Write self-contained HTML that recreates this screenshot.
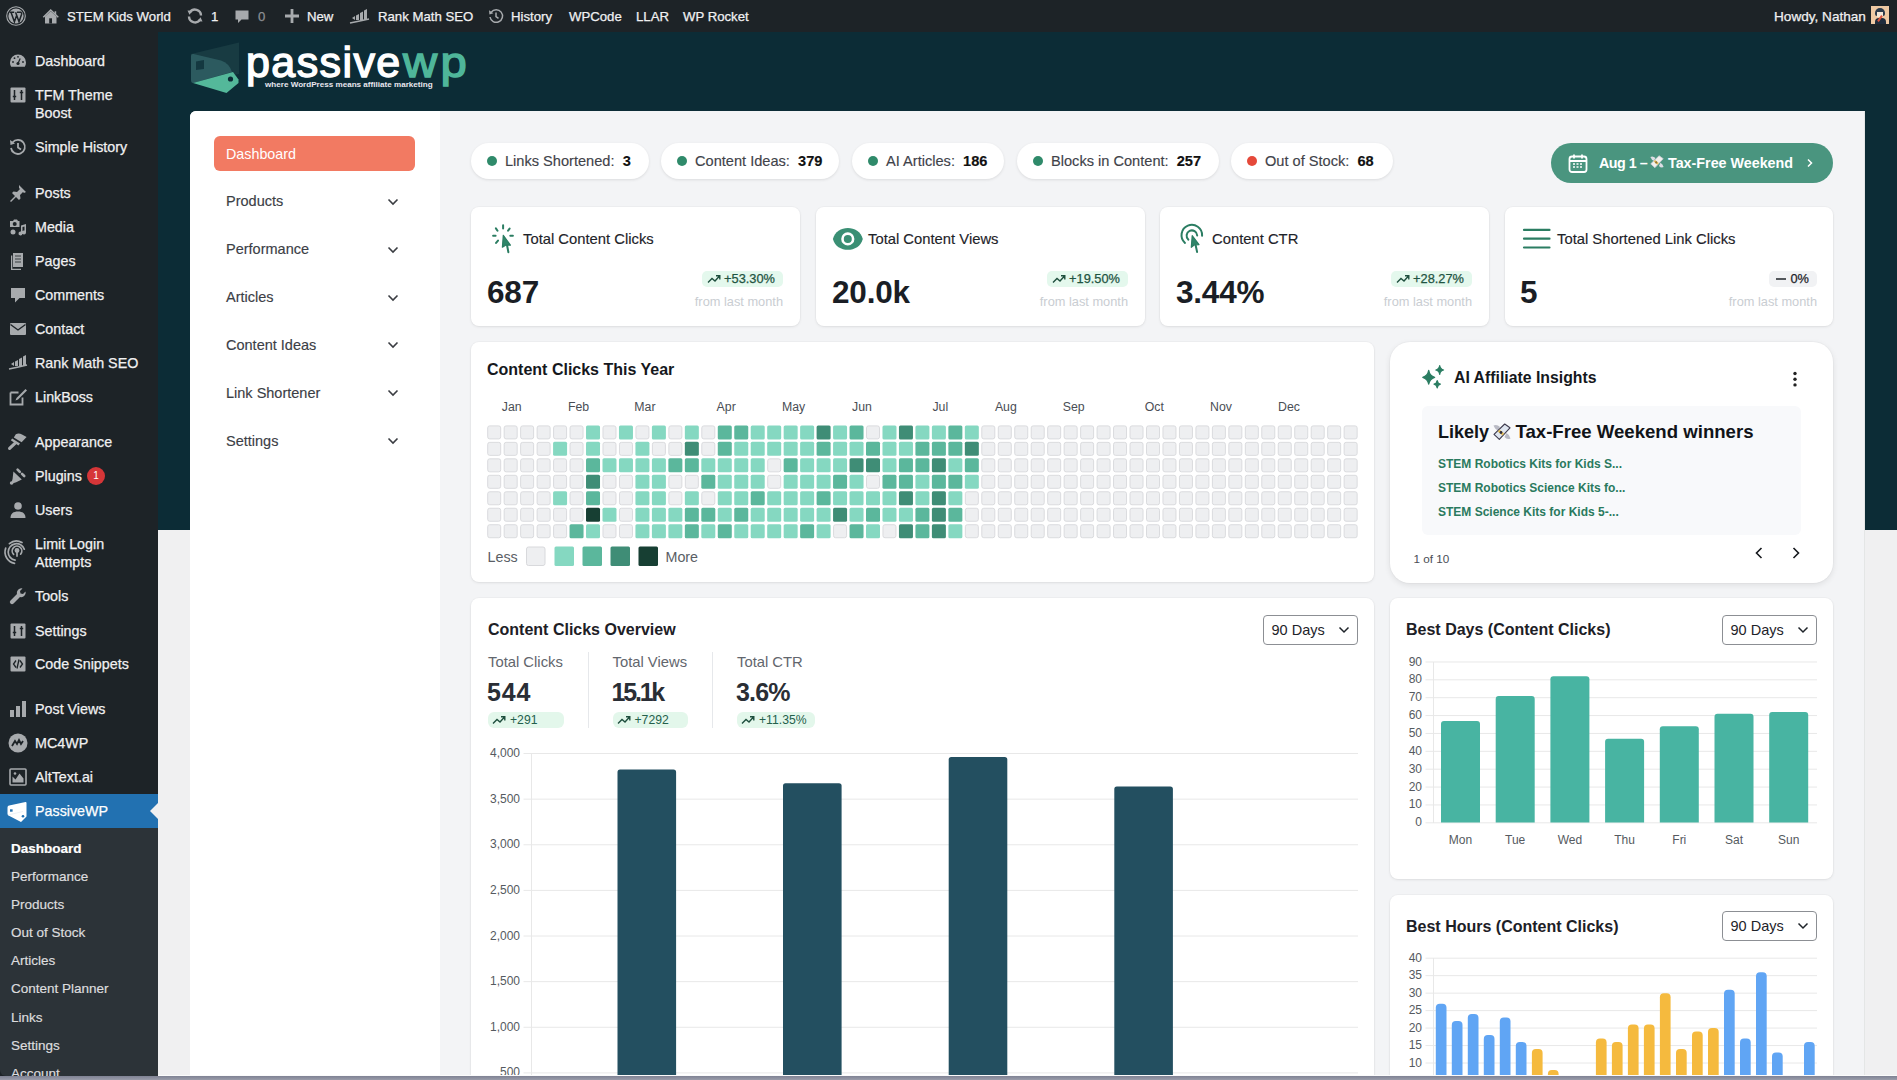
<!DOCTYPE html>
<html><head><meta charset="utf-8">
<style>
*{box-sizing:border-box}
html,body{margin:0;padding:0}
body{width:1897px;height:1080px;overflow:hidden;position:relative;background:#f0f0f1;font-family:"Liberation Sans",sans-serif;color:#1d2327}
.abs{position:absolute}
#ab{left:0;top:0;width:1897px;height:32px;background:#1d2327;color:#f0f0f1;font-size:13.2px;-webkit-text-stroke:0.25px currentColor}
#ab .t{position:absolute;top:10px;line-height:14px;white-space:nowrap}
#ab svg{position:absolute}
#sb{left:0;top:32px;width:158px;height:1044px;background:#1d2327}
#sb .it{position:absolute;left:35px;color:#f0f0f1;font-size:14.3px;-webkit-text-stroke:0.25px currentColor;line-height:18px;white-space:nowrap}
#sb .ic{position:absolute;left:8px;width:20px;height:20px;margin-top:-1px}
#sub{position:absolute;left:0;top:827px;width:158px;height:250px;background:#2c3338;border-bottom-left-radius:6px}
#sub .s{position:absolute;left:11px;color:#dcdcde;-webkit-text-stroke:0.2px currentColor;font-size:13.5px;line-height:18px;white-space:nowrap}
#teal{left:158px;top:32px;width:1739px;height:498px;background:#0c2c36}
#cont{left:190px;top:111px;width:1675px;height:965px;background:#f3f4f6;border-radius:6px 0 0 0;border-right:1px solid #e4e6e6}
#nav{left:190px;top:111px;width:250px;height:965px;background:#fff;border-radius:6px 0 0 0}
.nv{position:absolute;left:226px;font-size:14.5px;color:#3c4046;-webkit-text-stroke:0.15px currentColor;line-height:18px;white-space:nowrap}
.chev{position:absolute;left:387px;width:12px;height:8px}
.card{position:absolute;background:#fff;border-radius:8px;box-shadow:0 1px 3px rgba(0,0,0,0.08),0 0 0 1px rgba(0,0,0,0.02)}
.pill{position:absolute;top:143px;height:36px;background:#fff;border-radius:18px;box-shadow:0 1px 3px rgba(0,0,0,0.10);font-size:14.6px;line-height:36px;color:#3f434a;white-space:nowrap}
.pill .d{position:absolute;left:16px;top:13px;width:10px;height:10px;border-radius:5px;background:#2f8a6a}
.pill .l{position:absolute;left:34px;top:0;-webkit-text-stroke:0.15px currentColor}
.pill b{color:#111;font-weight:700}
#bot{left:0;top:1076px;width:1897px;height:4px;background:linear-gradient(#7f8294,#9a9caa)}
</style></head><body>
<style>
.ct{position:absolute;top:230px;font-size:14.8px;line-height:18px;color:#1e2329;-webkit-text-stroke:0.15px currentColor;white-space:nowrap}
.cn{position:absolute;top:274px;font-size:31.5px;line-height:36px;font-weight:700;color:#1a1e25;white-space:nowrap;letter-spacing:-0.2px}
.bd{position:absolute;top:271px;height:16px;border-radius:5px;background:#e4f8ed;color:#1f5442;-webkit-text-stroke:0.25px currentColor;font-size:12.8px;line-height:16px;white-space:nowrap;padding:0 8px 0 22px}
.bd svg{position:absolute;left:5px;top:3px}
.fl{position:absolute;top:294px;font-size:12.8px;line-height:16px;color:#c9cdd2;white-space:nowrap;text-align:right}
</style>
<div id="teal" class="abs"></div>
<div id="cont" class="abs"></div>
<div id="nav" class="abs"></div>
<div id="ab" class="abs">
 <svg style="left:6px;top:6px" width="20" height="20" viewBox="0 0 20 20"><circle cx="10" cy="10" r="9.3" fill="none" stroke="#a7aaad" stroke-width="1.1"/><circle cx="10" cy="10" r="7.6" fill="#a7aaad"/><path d="M3.6 6.2h4.6M11 6.2h4.4M5 6.3l3.4 9.4 2.2-6.2M9.6 6.3l3.4 9.4 2.6-7.4c.3-1-.1-1.7-.6-2" fill="none" stroke="#1d2327" stroke-width="1.5"/></svg>
 <svg style="left:42px;top:8px" width="18" height="18" viewBox="0 0 18 18"><path d="M1.3 9.2L8.7 2 16.3 9.2" fill="none" stroke="#a7aaad" stroke-width="1.5"/><path d="M12.6 3.3h1.6v3.4l-1.6-1.5z" fill="#a7aaad"/><path d="M3 8.6L8.7 3.3 14.5 8.6V15.5H3z" fill="#a7aaad"/><rect x="7.2" y="10.3" width="2.8" height="5.2" fill="#1d2327"/></svg>
 <span class="t" style="left:67px">STEM Kids World</span>
 <svg style="left:186px;top:8px" width="18" height="16" viewBox="0 0 18 16"><path d="M15 7.5A6 6 0 0 0 4 4.3" fill="none" stroke="#a7aaad" stroke-width="2.4"/><path d="M3 8.5A6 6 0 0 0 14 11.7" fill="none" stroke="#a7aaad" stroke-width="2.4"/><path d="M1.5 2.5l5 .3-3 4z M16.5 13.5l-5-.3 3-4z" fill="#a7aaad"/></svg>
 <span class="t" style="left:211px">1</span>
 <svg style="left:234px;top:9px" width="16" height="16" viewBox="0 0 16 16"><path d="M1.5 1.5h13v9h-7l-3.5 3.5v-3.5h-2.5z" fill="#a7aaad"/></svg>
 <span class="t" style="left:258px;color:#8c8f94">0</span>
 <svg style="left:285px;top:9px" width="14" height="14" viewBox="0 0 14 14"><path d="M5.6 0h2.8v5.6H14v2.8H8.4V14H5.6V8.4H0V5.6h5.6z" fill="#a7aaad"/></svg>
 <span class="t" style="left:307px">New</span>
 <svg style="left:349px;top:7px" width="21" height="18" viewBox="0 0 21 18"><path d="M3 11l3-2v4zM7 8.5l3-1.5v6H7zM11 6l3-1.5v8.5h-3zM15 3.5l3-1.5v11h-3z" fill="#a7aaad"/><path d="M1 16c5-1 10-2 19-4" fill="none" stroke="#a7aaad" stroke-width="1.6"/></svg>
 <span class="t" style="left:378px">Rank Math SEO</span>
 <svg style="left:488px;top:8px" width="16" height="16" viewBox="0 0 16 16"><path d="M3.2 4.2A6.3 6.3 0 1 1 2 9" fill="none" stroke="#a7aaad" stroke-width="1.5"/><path d="M1 2.2l.4 4.2 4-1.2z" fill="#a7aaad"/><path d="M8 4.5v4l2.5 1.8" fill="none" stroke="#a7aaad" stroke-width="1.5"/></svg>
 <span class="t" style="left:511px">History</span>
 <span class="t" style="left:569px">WPCode</span>
 <span class="t" style="left:636px">LLAR</span>
 <span class="t" style="left:683px">WP Rocket</span>
 <span class="t" style="left:1774px;font-size:13.6px">Howdy, Nathan</span>
 <div class="abs" style="left:1871px;top:6px;width:18px;height:18px;background:#efc9a3;overflow:hidden">
  <div class="abs" style="left:4px;top:2px;width:10px;height:8px;border-radius:5px 5px 2px 2px;background:#2c3a4a"></div>
  <div class="abs" style="left:6px;top:6px;width:6px;height:5px;background:#f4e6d6"></div>
  <div class="abs" style="left:4px;top:12px;width:11px;height:6px;border-radius:4px 4px 0 0;background:#1f2c3c"></div>
  <div class="abs" style="left:8px;top:9px;width:2px;height:7px;background:#d9543f;transform:rotate(35deg)"></div>
 </div>
</div>
<div id="sb" class="abs">
 <div id="sub" style="top:796px;height:248px">
  <span class="s" style="top:12px;color:#fff;font-weight:700">Dashboard</span>
  <span class="s" style="top:40px">Performance</span>
  <span class="s" style="top:68px">Products</span>
  <span class="s" style="top:96px">Out of Stock</span>
  <span class="s" style="top:124px">Articles</span>
  <span class="s" style="top:152px">Content Planner</span>
  <span class="s" style="top:181px">Links</span>
  <span class="s" style="top:209px">Settings</span>
  <span class="s" style="top:237px">Account</span>
 </div>
 <div class="abs" style="left:0;top:762px;width:158px;height:34px;background:#2271b1"></div>
 <svg class="abs" style="left:150px;top:771px" width="8" height="16" viewBox="0 0 8 16"><path d="M8 0L0 8l8 8z" fill="#f0f0f1"/></svg>
 <!-- items: top offsets relative to sb (sb top=32) ; text top = item+8 -->
 <svg class="ic" style="top:20px" viewBox="0 0 20 20"><path d="M10 3.5a8 8 0 0 0-8 8c0 1.6.5 3 1.2 4.2h13.6c.8-1.2 1.2-2.6 1.2-4.2a8 8 0 0 0-8-8z" fill="#a7aaad"/><circle cx="10" cy="12.5" r="1.6" fill="#1d2327"/><path d="M10 12.5l2.2-5" stroke="#1d2327" stroke-width="1.2"/><circle cx="5" cy="11" r=".9" fill="#1d2327"/><circle cx="6.5" cy="7.2" r=".9" fill="#1d2327"/><circle cx="10" cy="5.8" r=".9" fill="#1d2327"/><circle cx="15" cy="11" r=".9" fill="#1d2327"/></svg>
 <span class="it" style="top:20px">Dashboard</span>
 <svg class="ic" style="top:54px" viewBox="0 0 20 20"><rect x="2.5" y="2.5" width="15" height="15" rx="1" fill="#a7aaad"/><path d="M6.5 5v10M13.5 5v10M4.8 11.5h3.4M11.8 7.5h3.4" stroke="#1d2327" stroke-width="1.5"/></svg>
 <span class="it" style="top:54px">TFM Theme<br>Boost</span>
 <svg class="ic" style="top:106px" viewBox="0 0 20 20"><path d="M4.5 5.5A7 7 0 1 1 3 11" fill="none" stroke="#a7aaad" stroke-width="1.8"/><path d="M2 3l.5 5 4.5-1.5z" fill="#a7aaad"/><path d="M10 6v4.5l3 2" fill="none" stroke="#a7aaad" stroke-width="1.8"/></svg>
 <span class="it" style="top:106px">Simple History</span>
 <svg class="ic" style="top:152px" viewBox="0 0 20 20"><path d="M11 2l7 7-2 1-1-1-3 3 .5 3.5-1.5 1.5-3-3-5 5-1-1 5-5-3-3 1.5-1.5 3.5.5 3-3-1-1z" fill="#a7aaad"/></svg>
 <span class="it" style="top:152px">Posts</span>
 <svg class="ic" style="top:186px" viewBox="0 0 20 20"><path d="M2 4h3l1-1.5h3L10 4h1.5v6H2z" fill="#a7aaad"/><circle cx="6.7" cy="7" r="2" fill="#1d2327"/><path d="M13 8.5l5-1.5v8.5a2 2 0 1 1-1.5-2V9.5l-2 .6v6.4a2 2 0 1 1-1.5-2z" fill="#a7aaad"/><circle cx="5" cy="15" r="2.5" fill="#a7aaad"/></svg>
 <span class="it" style="top:186px">Media</span>
 <svg class="ic" style="top:220px" viewBox="0 0 20 20"><path d="M5 2h10v14H5z" fill="#a7aaad"/><path d="M3 4.5h1.3v13.2H13V19H3z" fill="#a7aaad"/><path d="M7 5h6M7 8h6M7 11h6" stroke="#1d2327" stroke-width=".8"/></svg>
 <span class="it" style="top:220px">Pages</span>
 <svg class="ic" style="top:254px" viewBox="0 0 20 20"><path d="M3 3h14v10h-5.5L7 17.5V13H3z" fill="#a7aaad"/></svg>
 <span class="it" style="top:254px">Comments</span>
 <svg class="ic" style="top:288px" viewBox="0 0 20 20"><rect x="2" y="4" width="16" height="12" rx="1" fill="#a7aaad"/><path d="M2.5 5.5L10 11l7.5-5.5" fill="none" stroke="#1d2327" stroke-width="1.4"/></svg>
 <span class="it" style="top:288px">Contact</span>
 <svg class="ic" style="top:322px" viewBox="0 0 20 20"><path d="M3 11l3-2v4zM7 8.5l3-1.5v6H7zM11 6l3-1.5v8.5h-3zM15 3.5l3-1.5v11h-3z" fill="#a7aaad"/><path d="M1 16c5-1 10-2 18-4" fill="none" stroke="#a7aaad" stroke-width="1.6"/></svg>
 <span class="it" style="top:322px">Rank Math SEO</span>
 <svg class="ic" style="top:356px" viewBox="0 0 20 20"><path d="M2.5 5.5h8M2.5 5.5v12h12v-7" fill="none" stroke="#a7aaad" stroke-width="1.8"/><path d="M17.5 2l1.5 1.5-9 9-2.5 1 1-2.5z" fill="#a7aaad"/></svg>
 <span class="it" style="top:356px">LinkBoss</span>
 
 <svg class="abs" style="left:0;top:393px" width="36" height="70" viewBox="0 0 36 70"><path d="M13.8 12.4L15.8 9.2Q19 7.8 22 9.6L26.6 12.1 21.6 17.2Z" fill="#a7aaad"/><path d="M12.2 13.4L20 18.6 18.4 20.4 10.8 15.2Z" fill="#a7aaad"/><path d="M15.2 18.2L9.6 23.4" stroke="#a7aaad" stroke-width="3.2" stroke-linecap="round"/>
<path d="M13.4 46.6L21.8 54.4 16.2 57.2 12.4 58.6 11.6 57.6 12.6 53.8Z" fill="#a7aaad"/><path d="M17.6 44.6L19.8 46.8M22 48.8L24.2 51" stroke="#a7aaad" stroke-width="2.6" stroke-linecap="round"/><circle cx="11.6" cy="58" r="1.8" fill="#a7aaad"/></svg>
<svg class="abs" style="left:0;top:499px" width="30" height="36" viewBox="0 0 30 36"><g fill="none" stroke="#a7aaad" stroke-width="1.7" stroke-linecap="round"><circle cx="17" cy="19.5" r="1.6" fill="#a7aaad"/><path d="M17 19.5v5.6"/><path d="M13.6 23.4A4.8 4.8 0 1 1 20.6 23.2"/><path d="M15.1 29.2A8.3 8.3 0 1 1 24.3 18.2"/><path d="M14.5 32.3A11.5 11.5 0 0 1 5.7 17.1"/><path d="M9.4 12.6A11 11 0 0 1 22 11.5"/></g></svg>
<span class="it" style="top:401px">Appearance</span>
 
 <span class="it" style="top:435px">Plugins</span>
 <div class="abs" style="left:87px;top:435px;width:18px;height:18px;border-radius:9px;background:#d63638;color:#fff;font-size:10px;line-height:18px;text-align:center">1</div>
 <svg class="ic" style="top:469px" viewBox="0 0 20 20"><circle cx="10" cy="6" r="3.8" fill="#a7aaad"/><path d="M2.5 18c0-4.5 3-6.5 7.5-6.5s7.5 2 7.5 6.5z" fill="#a7aaad"/></svg>
 <span class="it" style="top:469px">Users</span>
 
 <span class="it" style="top:503px">Limit Login<br>Attempts</span>
 <svg class="ic" style="top:555px" viewBox="0 0 20 20"><path d="M17.5 5.5l-2.5 2.5-2.5-.5-.5-2.5L14.5 2.5A4.5 4.5 0 0 0 9 8L2.5 14.5a1.8 1.8 0 0 0 3 3L12 11a4.5 4.5 0 0 0 5.5-5.5z" fill="#a7aaad"/></svg>
 <span class="it" style="top:555px">Tools</span>
 <svg class="ic" style="top:590px" viewBox="0 0 20 20"><rect x="2.5" y="2.5" width="15" height="15" rx="1" fill="#a7aaad"/><path d="M6.5 5v10M13.5 5v10M4.8 11.5h3.4M11.8 7.5h3.4" stroke="#1d2327" stroke-width="1.5"/></svg>
 <span class="it" style="top:590px">Settings</span>
 <svg class="ic" style="top:623px" viewBox="0 0 20 20"><rect x="2.5" y="2.5" width="15" height="15" rx="1" fill="#a7aaad"/><path d="M8 6.5L5.5 10 8 13.5M12 6.5L14.5 10 12 13.5M11 5.5L9 14.5" fill="none" stroke="#1d2327" stroke-width="1.3"/></svg>
 <span class="it" style="top:623px">Code Snippets</span>
 <svg class="ic" style="top:668px" viewBox="0 0 20 20"><rect x="2" y="11" width="4" height="7" fill="#a7aaad"/><rect x="8" y="7" width="4" height="11" fill="#a7aaad"/><rect x="14" y="2" width="4" height="16" fill="#a7aaad"/></svg>
 <span class="it" style="top:668px">Post Views</span>
 <svg class="ic" style="top:702px" viewBox="0 0 20 20"><circle cx="10" cy="10" r="9.5" fill="#a7aaad"/><path d="M4 13l3-5 2 3 2-4 2 4 2-3" fill="none" stroke="#1d2327" stroke-width="1.8"/></svg>
 <span class="it" style="top:702px">MC4WP</span>
 <svg class="ic" style="top:736px" viewBox="0 0 20 20"><rect x="2" y="2" width="16" height="16" rx="1" fill="none" stroke="#a7aaad" stroke-width="1.6"/><path d="M4.5 15.5v-6l3 3 4-6 4 5v4z" fill="#a7aaad"/><circle cx="7" cy="6.5" r="1.3" fill="#a7aaad"/></svg>
 <span class="it" style="top:736px">AltText.ai</span>
 <svg class="abs" style="left:6px;top:769px" width="22" height="22" viewBox="0 0 22 22"><path d="M1.5 6.5Q1.5 4.8 3.2 4.6L19.5 1Q20.5 .9 20.5 2V15.5L15 21 2.5 14.5Q1.5 14 1.5 12.8Z" fill="#fff"/><rect x="4" y="8.3" width="2.6" height="2.4" fill="#2271b1"/><circle cx="17" cy="15.3" r="1.3" fill="#2271b1"/><path d="M2 14l15-3.5" stroke="#dfe8f0" stroke-width=".6"/></svg>
 <span class="it" style="top:770px;color:#fff">PassiveWP</span>
</div>
<svg class="abs" style="left:185px;top:38px" width="60" height="60" viewBox="0 0 60 60">
 <path d="M6 16 L54 4.5 L54 36 L8 45 Z" fill="#183b42"/>
 <path d="M6 18 Q6 15.5 8.5 16 L36 22.5 Q44 25 47 34 L8 45 Q6 45 6 42 Z" fill="#2c5a5f"/>
 <path d="M11 23.5 L19 22 L19 31 L11 32 Z" fill="#143840"/>
 <path d="M8 45 L48 34 L53.5 41.5 L53.5 45 L41.5 55 Z" fill="#54b89a"/>
 <circle cx="45.5" cy="41" r="2.6" fill="#0c2c36"/>
</svg>
<div class="abs" style="left:246px;top:41px;font-size:43px;line-height:43px;letter-spacing:1.4px;color:#fff;white-space:nowrap;-webkit-text-stroke:1.4px #fff">passive<span style="display:inline-block;transform:scaleX(1.1);transform-origin:0 0;margin-left:1px;color:#4fb69a;-webkit-text-stroke:1.4px #4fb69a;letter-spacing:3px">wp</span></div>
<div class="abs" style="left:265px;top:80px;font-size:8.1px;line-height:10px;font-weight:700;color:#e8e6ef;white-space:nowrap">where WordPress means affiliate marketing</div>
<div class="abs" style="left:214px;top:136px;width:201px;height:35px;border-radius:6px;background:#f27a62"></div>
<div class="abs" style="left:226px;top:145px;font-size:14.3px;line-height:18px;color:#fff;white-space:nowrap">Dashboard</div>
<div class="nv" style="top:192px">Products</div>
<div class="nv" style="top:240px">Performance</div>
<div class="nv" style="top:288px">Articles</div>
<div class="nv" style="top:336px">Content Ideas</div>
<div class="nv" style="top:384px">Link Shortener</div>
<div class="nv" style="top:432px">Settings</div>
<svg class="chev" style="top:198px" viewBox="0 0 12 8"><path d="M1.5 1.5L6 6l4.5-4.5" fill="none" stroke="#3a3d42" stroke-width="1.6"/></svg>
<svg class="chev" style="top:246px" viewBox="0 0 12 8"><path d="M1.5 1.5L6 6l4.5-4.5" fill="none" stroke="#3a3d42" stroke-width="1.6"/></svg>
<svg class="chev" style="top:294px" viewBox="0 0 12 8"><path d="M1.5 1.5L6 6l4.5-4.5" fill="none" stroke="#3a3d42" stroke-width="1.6"/></svg>
<svg class="chev" style="top:341px" viewBox="0 0 12 8"><path d="M1.5 1.5L6 6l4.5-4.5" fill="none" stroke="#3a3d42" stroke-width="1.6"/></svg>
<svg class="chev" style="top:389px" viewBox="0 0 12 8"><path d="M1.5 1.5L6 6l4.5-4.5" fill="none" stroke="#3a3d42" stroke-width="1.6"/></svg>
<svg class="chev" style="top:437px" viewBox="0 0 12 8"><path d="M1.5 1.5L6 6l4.5-4.5" fill="none" stroke="#3a3d42" stroke-width="1.6"/></svg>
<div class="pill" style="left:471px;width:178px"><span class="d"></span><span class="l">Links Shortened:&nbsp; <b>3</b></span></div>
<div class="pill" style="left:661px;width:178px"><span class="d"></span><span class="l">Content Ideas:&nbsp; <b>379</b></span></div>
<div class="pill" style="left:852px;width:152px"><span class="d"></span><span class="l">AI Articles:&nbsp; <b>186</b></span></div>
<div class="pill" style="left:1017px;width:202px"><span class="d"></span><span class="l">Blocks in Content:&nbsp; <b>257</b></span></div>
<div class="pill" style="left:1231px;width:162px"><span class="d" style="background:#e5493a"></span><span class="l">Out of Stock:&nbsp; <b>68</b></span></div>

<div class="abs" style="left:1551px;top:143px;width:282px;height:40px;border-radius:20px;background:#4a957f"></div>
<svg class="abs" style="left:1568px;top:153px" width="21" height="21" viewBox="0 0 21 21"><rect x="1.5" y="3.5" width="17" height="15.5" rx="2.5" fill="none" stroke="#fff" stroke-width="1.8"/><path d="M1.5 8h17M6 1.5v4M14 1.5v4" stroke="#fff" stroke-width="1.8"/><path d="M5 11h2M8.5 11h2M12 11h2M5 14h2M8.5 14h2M12 14h2M12 11h2" stroke="#fff" stroke-width="1.4"/></svg>
<div class="abs" style="left:1599px;top:153px;font-size:14.3px;line-height:20px;font-weight:700;color:#fff;white-space:nowrap;letter-spacing:-0.5px">Aug 1 –</div>
<div class="abs" style="left:1668px;top:153px;font-size:14.3px;line-height:20px;font-weight:700;color:#fff;white-space:nowrap">Tax-Free Weekend</div>
<svg class="abs" style="left:1649px;top:155px" width="16" height="14" viewBox="0 0 20 18"><path d="M1.5 2.5Q5 1 8 4L6 7.5Q3 6.5 1.5 2.5Z" fill="#dcdde3"/><path d="M18.5 15.5Q15 17 12.5 14L14.5 10Q17.5 11.5 18.5 15.5Z" fill="#dcdde3"/><path d="M2 11.4L7.3 16.3 18 4.8 12.7 1Z" fill="#f1f0ee" stroke="#c9ccd2" stroke-width="1.1" stroke-linejoin="round"/><path d="M7.6 6.4L12.3 10.4 10.4 12.5 5.7 8.5Z" fill="#e9c25c"/><circle cx="9" cy="9.5" r="1.4" fill="#8a6f3a"/></svg>
<svg class="abs" style="left:1805px;top:158px" width="10" height="10" viewBox="0 0 10 10"><path d="M3 1.5L6.5 5 3 8.5" fill="none" stroke="#fff" stroke-width="1.5"/></svg>

<!-- stat cards -->
<div class="card" style="left:471px;top:207px;width:329px;height:119px"></div>
<div class="card" style="left:816px;top:207px;width:329px;height:119px"></div>
<div class="card" style="left:1160px;top:207px;width:329px;height:119px"></div>
<div class="card" style="left:1505px;top:207px;width:328px;height:119px"></div>
<!-- card1 -->
<svg class="abs" style="left:486px;top:220px" width="34" height="38" viewBox="0 0 34 38"><g stroke="#2b7d62" stroke-width="2" stroke-linecap="round"><path d="M17.1 5.2v3.4M9.9 8.4l1.6 2.3M23.6 8.6l-1.5 2M7.1 15.8h2.5M24.3 15.8h2.6M12 20.6l-1.9 2.3"/><path d="M21 25l1.4 7.2"/></g><path d="M17.3 15.3L16.4 27.2 19.9 24.9 24.4 25.2Z" fill="#2f8569" stroke="#2b7d62" stroke-width="1.2" stroke-linejoin="round"/></svg>
<div class="ct" style="left:523px">Total Content Clicks</div>
<div class="cn" style="left:487px">687</div>
<div class="bd" style="right:1114px"><svg width="14" height="10" viewBox="0 0 14 10"><path d="M1 8.5l4-4 3 2.5L12.5 2M9 1.8h3.8v3.7" fill="none" stroke="#1f4f3e" stroke-width="1.4"/></svg>+53.30%</div>
<div class="fl" style="right:1114px">from last month</div>
<!-- card2 -->
<svg class="abs" style="left:826px;top:220px" width="44" height="38" viewBox="0 0 44 38"><path d="M6.9 18.9C10.5 4.2 33.2 4.2 36.8 18.9C33.2 33.4 10.5 33.4 6.9 18.9Z" fill="#3a8f74"/><circle cx="21.8" cy="18.9" r="5.3" fill="none" stroke="#fff" stroke-width="2.6"/></svg>
<div class="ct" style="left:868px">Total Content Views</div>
<div class="cn" style="left:832px">20.0k</div>
<div class="bd" style="right:769px"><svg width="14" height="10" viewBox="0 0 14 10"><path d="M1 8.5l4-4 3 2.5L12.5 2M9 1.8h3.8v3.7" fill="none" stroke="#1f4f3e" stroke-width="1.4"/></svg>+19.50%</div>
<div class="fl" style="right:769px">from last month</div>
<!-- card3 -->
<svg class="abs" style="left:1172px;top:220px" width="38" height="38" viewBox="0 0 38 38"><g fill="none" stroke="#2b7d62" stroke-width="2" stroke-linecap="round"><path d="M13 22.9A10.3 10.3 0 1 1 30.1 15.8"/><path d="M16.4 19.7A5.3 5.3 0 1 1 25.2 15.5"/><path d="M23.6 25l1.5 7"/></g><path d="M20.2 15.7L19.3 27.3 22.5 24.8 27 24.6Z" fill="#2f8569" stroke="#2b7d62" stroke-width="1.2" stroke-linejoin="round"/></svg>
<div class="ct" style="left:1212px">Content CTR</div>
<div class="cn" style="left:1176px">3.44%</div>
<div class="bd" style="right:425px"><svg width="14" height="10" viewBox="0 0 14 10"><path d="M1 8.5l4-4 3 2.5L12.5 2M9 1.8h3.8v3.7" fill="none" stroke="#1f4f3e" stroke-width="1.4"/></svg>+28.27%</div>
<div class="fl" style="right:425px">from last month</div>
<!-- card4 -->
<svg class="abs" style="left:1522px;top:226px" width="30" height="26" viewBox="0 0 30 26"><path d="M2 3.9h25.5M2 12.7h25.5M2 21.5h25.5" stroke="#2b7d62" stroke-width="2.2" stroke-linecap="round"/></svg>
<div class="ct" style="left:1557px">Total Shortened Link Clicks</div>
<div class="cn" style="left:1520px">5</div>
<div class="bd" style="right:80px;background:#f1f2f4;color:#1e2329;padding-left:22px"><svg width="14" height="10" viewBox="0 0 14 10"><path d="M2 5h10" stroke="#1e2329" stroke-width="1.5"/></svg>0%</div>
<div class="fl" style="right:80px">from last month</div>
<div class="card" style="left:471px;top:342px;width:903px;height:240px"></div>
<div class="abs" style="left:487px;top:361px;font-size:16px;line-height:18px;font-weight:700;color:#15181d;white-space:nowrap">Content Clicks This Year</div>
<div class="abs" style="left:501.8px;top:400px;font-size:12.3px;line-height:14px;color:#4a4e55;white-space:nowrap">Jan</div>
<div class="abs" style="left:568px;top:400px;font-size:12.3px;line-height:14px;color:#4a4e55;white-space:nowrap">Feb</div>
<div class="abs" style="left:634.3px;top:400px;font-size:12.3px;line-height:14px;color:#4a4e55;white-space:nowrap">Mar</div>
<div class="abs" style="left:716.6px;top:400px;font-size:12.3px;line-height:14px;color:#4a4e55;white-space:nowrap">Apr</div>
<div class="abs" style="left:782px;top:400px;font-size:12.3px;line-height:14px;color:#4a4e55;white-space:nowrap">May</div>
<div class="abs" style="left:852px;top:400px;font-size:12.3px;line-height:14px;color:#4a4e55;white-space:nowrap">Jun</div>
<div class="abs" style="left:932.4px;top:400px;font-size:12.3px;line-height:14px;color:#4a4e55;white-space:nowrap">Jul</div>
<div class="abs" style="left:994.9px;top:400px;font-size:12.3px;line-height:14px;color:#4a4e55;white-space:nowrap">Aug</div>
<div class="abs" style="left:1062.8px;top:400px;font-size:12.3px;line-height:14px;color:#4a4e55;white-space:nowrap">Sep</div>
<div class="abs" style="left:1144.8px;top:400px;font-size:12.3px;line-height:14px;color:#4a4e55;white-space:nowrap">Oct</div>
<div class="abs" style="left:1210.1px;top:400px;font-size:12.3px;line-height:14px;color:#4a4e55;white-space:nowrap">Nov</div>
<div class="abs" style="left:1278px;top:400px;font-size:12.3px;line-height:14px;color:#4a4e55;white-space:nowrap">Dec</div>
<svg class="abs" style="left:480px;top:420px" width="890" height="125" viewBox="480 420 890 125"><rect x="487.70" y="425.90" width="13" height="13" rx="2" fill="#eeeff1" stroke="#dadbde" stroke-width="1"/><rect x="487.70" y="442.37" width="13" height="13" rx="2" fill="#eeeff1" stroke="#dadbde" stroke-width="1"/><rect x="487.70" y="458.84" width="13" height="13" rx="2" fill="#eeeff1" stroke="#dadbde" stroke-width="1"/><rect x="487.70" y="475.31" width="13" height="13" rx="2" fill="#eeeff1" stroke="#dadbde" stroke-width="1"/><rect x="487.70" y="491.78" width="13" height="13" rx="2" fill="#eeeff1" stroke="#dadbde" stroke-width="1"/><rect x="487.70" y="508.25" width="13" height="13" rx="2" fill="#eeeff1" stroke="#dadbde" stroke-width="1"/><rect x="487.70" y="524.72" width="13" height="13" rx="2" fill="#eeeff1" stroke="#dadbde" stroke-width="1"/><rect x="504.17" y="425.90" width="13" height="13" rx="2" fill="#eeeff1" stroke="#dadbde" stroke-width="1"/><rect x="504.17" y="442.37" width="13" height="13" rx="2" fill="#eeeff1" stroke="#dadbde" stroke-width="1"/><rect x="504.17" y="458.84" width="13" height="13" rx="2" fill="#eeeff1" stroke="#dadbde" stroke-width="1"/><rect x="504.17" y="475.31" width="13" height="13" rx="2" fill="#eeeff1" stroke="#dadbde" stroke-width="1"/><rect x="504.17" y="491.78" width="13" height="13" rx="2" fill="#eeeff1" stroke="#dadbde" stroke-width="1"/><rect x="504.17" y="508.25" width="13" height="13" rx="2" fill="#eeeff1" stroke="#dadbde" stroke-width="1"/><rect x="504.17" y="524.72" width="13" height="13" rx="2" fill="#eeeff1" stroke="#dadbde" stroke-width="1"/><rect x="520.64" y="425.90" width="13" height="13" rx="2" fill="#eeeff1" stroke="#dadbde" stroke-width="1"/><rect x="520.64" y="442.37" width="13" height="13" rx="2" fill="#eeeff1" stroke="#dadbde" stroke-width="1"/><rect x="520.64" y="458.84" width="13" height="13" rx="2" fill="#eeeff1" stroke="#dadbde" stroke-width="1"/><rect x="520.64" y="475.31" width="13" height="13" rx="2" fill="#eeeff1" stroke="#dadbde" stroke-width="1"/><rect x="520.64" y="491.78" width="13" height="13" rx="2" fill="#eeeff1" stroke="#dadbde" stroke-width="1"/><rect x="520.64" y="508.25" width="13" height="13" rx="2" fill="#eeeff1" stroke="#dadbde" stroke-width="1"/><rect x="520.64" y="524.72" width="13" height="13" rx="2" fill="#eeeff1" stroke="#dadbde" stroke-width="1"/><rect x="537.11" y="425.90" width="13" height="13" rx="2" fill="#eeeff1" stroke="#dadbde" stroke-width="1"/><rect x="537.11" y="442.37" width="13" height="13" rx="2" fill="#eeeff1" stroke="#dadbde" stroke-width="1"/><rect x="537.11" y="458.84" width="13" height="13" rx="2" fill="#eeeff1" stroke="#dadbde" stroke-width="1"/><rect x="537.11" y="475.31" width="13" height="13" rx="2" fill="#eeeff1" stroke="#dadbde" stroke-width="1"/><rect x="537.11" y="491.78" width="13" height="13" rx="2" fill="#eeeff1" stroke="#dadbde" stroke-width="1"/><rect x="537.11" y="508.25" width="13" height="13" rx="2" fill="#eeeff1" stroke="#dadbde" stroke-width="1"/><rect x="537.11" y="524.72" width="13" height="13" rx="2" fill="#eeeff1" stroke="#dadbde" stroke-width="1"/><rect x="553.58" y="425.90" width="13" height="13" rx="2" fill="#eeeff1" stroke="#dadbde" stroke-width="1"/><rect x="553.08" y="441.87" width="14" height="14" rx="1.5" fill="#85d8c1"/><rect x="553.58" y="458.84" width="13" height="13" rx="2" fill="#eeeff1" stroke="#dadbde" stroke-width="1"/><rect x="553.58" y="475.31" width="13" height="13" rx="2" fill="#eeeff1" stroke="#dadbde" stroke-width="1"/><rect x="553.08" y="491.28" width="14" height="14" rx="1.5" fill="#85d8c1"/><rect x="553.58" y="508.25" width="13" height="13" rx="2" fill="#eeeff1" stroke="#dadbde" stroke-width="1"/><rect x="553.58" y="524.72" width="13" height="13" rx="2" fill="#eeeff1" stroke="#dadbde" stroke-width="1"/><rect x="570.05" y="425.90" width="13" height="13" rx="2" fill="#eeeff1" stroke="#dadbde" stroke-width="1"/><rect x="570.05" y="442.37" width="13" height="13" rx="2" fill="#eeeff1" stroke="#dadbde" stroke-width="1"/><rect x="570.05" y="458.84" width="13" height="13" rx="2" fill="#eeeff1" stroke="#dadbde" stroke-width="1"/><rect x="570.05" y="475.31" width="13" height="13" rx="2" fill="#eeeff1" stroke="#dadbde" stroke-width="1"/><rect x="570.05" y="491.78" width="13" height="13" rx="2" fill="#eeeff1" stroke="#dadbde" stroke-width="1"/><rect x="570.05" y="508.25" width="13" height="13" rx="2" fill="#eeeff1" stroke="#dadbde" stroke-width="1"/><rect x="569.55" y="524.22" width="14" height="14" rx="1.5" fill="#5bb79c"/><rect x="586.02" y="425.40" width="14" height="14" rx="1.5" fill="#85d8c1"/><rect x="586.02" y="441.87" width="14" height="14" rx="1.5" fill="#85d8c1"/><rect x="586.02" y="458.34" width="14" height="14" rx="1.5" fill="#5bb79c"/><rect x="586.02" y="474.81" width="14" height="14" rx="1.5" fill="#3f8d76"/><rect x="586.02" y="491.28" width="14" height="14" rx="1.5" fill="#5bb79c"/><rect x="586.02" y="507.75" width="14" height="14" rx="1.5" fill="#173f33"/><rect x="586.02" y="524.22" width="14" height="14" rx="1.5" fill="#85d8c1"/><rect x="602.99" y="425.90" width="13" height="13" rx="2" fill="#eeeff1" stroke="#dadbde" stroke-width="1"/><rect x="602.99" y="442.37" width="13" height="13" rx="2" fill="#eeeff1" stroke="#dadbde" stroke-width="1"/><rect x="602.49" y="458.34" width="14" height="14" rx="1.5" fill="#85d8c1"/><rect x="602.99" y="475.31" width="13" height="13" rx="2" fill="#eeeff1" stroke="#dadbde" stroke-width="1"/><rect x="602.99" y="491.78" width="13" height="13" rx="2" fill="#eeeff1" stroke="#dadbde" stroke-width="1"/><rect x="602.49" y="507.75" width="14" height="14" rx="1.5" fill="#85d8c1"/><rect x="602.99" y="524.72" width="13" height="13" rx="2" fill="#eeeff1" stroke="#dadbde" stroke-width="1"/><rect x="618.96" y="425.40" width="14" height="14" rx="1.5" fill="#85d8c1"/><rect x="619.46" y="442.37" width="13" height="13" rx="2" fill="#eeeff1" stroke="#dadbde" stroke-width="1"/><rect x="618.96" y="458.34" width="14" height="14" rx="1.5" fill="#85d8c1"/><rect x="619.46" y="475.31" width="13" height="13" rx="2" fill="#eeeff1" stroke="#dadbde" stroke-width="1"/><rect x="619.46" y="491.78" width="13" height="13" rx="2" fill="#eeeff1" stroke="#dadbde" stroke-width="1"/><rect x="619.46" y="508.25" width="13" height="13" rx="2" fill="#eeeff1" stroke="#dadbde" stroke-width="1"/><rect x="619.46" y="524.72" width="13" height="13" rx="2" fill="#eeeff1" stroke="#dadbde" stroke-width="1"/><rect x="635.93" y="425.90" width="13" height="13" rx="2" fill="#eeeff1" stroke="#dadbde" stroke-width="1"/><rect x="635.43" y="441.87" width="14" height="14" rx="1.5" fill="#85d8c1"/><rect x="635.43" y="458.34" width="14" height="14" rx="1.5" fill="#85d8c1"/><rect x="635.43" y="474.81" width="14" height="14" rx="1.5" fill="#85d8c1"/><rect x="635.43" y="491.28" width="14" height="14" rx="1.5" fill="#85d8c1"/><rect x="635.43" y="507.75" width="14" height="14" rx="1.5" fill="#85d8c1"/><rect x="635.43" y="524.22" width="14" height="14" rx="1.5" fill="#85d8c1"/><rect x="651.90" y="425.40" width="14" height="14" rx="1.5" fill="#85d8c1"/><rect x="652.40" y="442.37" width="13" height="13" rx="2" fill="#eeeff1" stroke="#dadbde" stroke-width="1"/><rect x="651.90" y="458.34" width="14" height="14" rx="1.5" fill="#85d8c1"/><rect x="651.90" y="474.81" width="14" height="14" rx="1.5" fill="#85d8c1"/><rect x="651.90" y="491.28" width="14" height="14" rx="1.5" fill="#85d8c1"/><rect x="651.90" y="507.75" width="14" height="14" rx="1.5" fill="#85d8c1"/><rect x="651.90" y="524.22" width="14" height="14" rx="1.5" fill="#85d8c1"/><rect x="668.87" y="425.90" width="13" height="13" rx="2" fill="#eeeff1" stroke="#dadbde" stroke-width="1"/><rect x="668.87" y="442.37" width="13" height="13" rx="2" fill="#eeeff1" stroke="#dadbde" stroke-width="1"/><rect x="668.37" y="458.34" width="14" height="14" rx="1.5" fill="#5bb79c"/><rect x="668.87" y="475.31" width="13" height="13" rx="2" fill="#eeeff1" stroke="#dadbde" stroke-width="1"/><rect x="668.87" y="491.78" width="13" height="13" rx="2" fill="#eeeff1" stroke="#dadbde" stroke-width="1"/><rect x="668.37" y="507.75" width="14" height="14" rx="1.5" fill="#85d8c1"/><rect x="668.37" y="524.22" width="14" height="14" rx="1.5" fill="#85d8c1"/><rect x="684.84" y="425.40" width="14" height="14" rx="1.5" fill="#85d8c1"/><rect x="684.84" y="441.87" width="14" height="14" rx="1.5" fill="#3f8d76"/><rect x="684.84" y="458.34" width="14" height="14" rx="1.5" fill="#5bb79c"/><rect x="685.34" y="475.31" width="13" height="13" rx="2" fill="#eeeff1" stroke="#dadbde" stroke-width="1"/><rect x="684.84" y="491.28" width="14" height="14" rx="1.5" fill="#85d8c1"/><rect x="684.84" y="507.75" width="14" height="14" rx="1.5" fill="#5bb79c"/><rect x="684.84" y="524.22" width="14" height="14" rx="1.5" fill="#5bb79c"/><rect x="701.81" y="425.90" width="13" height="13" rx="2" fill="#eeeff1" stroke="#dadbde" stroke-width="1"/><rect x="701.81" y="442.37" width="13" height="13" rx="2" fill="#eeeff1" stroke="#dadbde" stroke-width="1"/><rect x="701.31" y="458.34" width="14" height="14" rx="1.5" fill="#85d8c1"/><rect x="701.31" y="474.81" width="14" height="14" rx="1.5" fill="#5bb79c"/><rect x="701.81" y="491.78" width="13" height="13" rx="2" fill="#eeeff1" stroke="#dadbde" stroke-width="1"/><rect x="701.31" y="507.75" width="14" height="14" rx="1.5" fill="#5bb79c"/><rect x="701.31" y="524.22" width="14" height="14" rx="1.5" fill="#85d8c1"/><rect x="717.78" y="425.40" width="14" height="14" rx="1.5" fill="#5bb79c"/><rect x="717.78" y="441.87" width="14" height="14" rx="1.5" fill="#5bb79c"/><rect x="717.78" y="458.34" width="14" height="14" rx="1.5" fill="#85d8c1"/><rect x="717.78" y="474.81" width="14" height="14" rx="1.5" fill="#85d8c1"/><rect x="717.78" y="491.28" width="14" height="14" rx="1.5" fill="#85d8c1"/><rect x="717.78" y="507.75" width="14" height="14" rx="1.5" fill="#85d8c1"/><rect x="717.78" y="524.22" width="14" height="14" rx="1.5" fill="#5bb79c"/><rect x="734.25" y="425.40" width="14" height="14" rx="1.5" fill="#5bb79c"/><rect x="734.25" y="441.87" width="14" height="14" rx="1.5" fill="#85d8c1"/><rect x="734.25" y="458.34" width="14" height="14" rx="1.5" fill="#85d8c1"/><rect x="734.25" y="474.81" width="14" height="14" rx="1.5" fill="#85d8c1"/><rect x="734.25" y="491.28" width="14" height="14" rx="1.5" fill="#85d8c1"/><rect x="734.25" y="507.75" width="14" height="14" rx="1.5" fill="#5bb79c"/><rect x="734.25" y="524.22" width="14" height="14" rx="1.5" fill="#85d8c1"/><rect x="750.72" y="425.40" width="14" height="14" rx="1.5" fill="#85d8c1"/><rect x="750.72" y="441.87" width="14" height="14" rx="1.5" fill="#85d8c1"/><rect x="750.72" y="458.34" width="14" height="14" rx="1.5" fill="#85d8c1"/><rect x="750.72" y="474.81" width="14" height="14" rx="1.5" fill="#85d8c1"/><rect x="750.72" y="491.28" width="14" height="14" rx="1.5" fill="#5bb79c"/><rect x="750.72" y="507.75" width="14" height="14" rx="1.5" fill="#85d8c1"/><rect x="750.72" y="524.22" width="14" height="14" rx="1.5" fill="#85d8c1"/><rect x="767.19" y="425.40" width="14" height="14" rx="1.5" fill="#85d8c1"/><rect x="767.19" y="441.87" width="14" height="14" rx="1.5" fill="#85d8c1"/><rect x="767.69" y="458.84" width="13" height="13" rx="2" fill="#eeeff1" stroke="#dadbde" stroke-width="1"/><rect x="767.69" y="475.31" width="13" height="13" rx="2" fill="#eeeff1" stroke="#dadbde" stroke-width="1"/><rect x="767.19" y="491.28" width="14" height="14" rx="1.5" fill="#85d8c1"/><rect x="767.19" y="507.75" width="14" height="14" rx="1.5" fill="#85d8c1"/><rect x="767.19" y="524.22" width="14" height="14" rx="1.5" fill="#85d8c1"/><rect x="783.66" y="425.40" width="14" height="14" rx="1.5" fill="#85d8c1"/><rect x="783.66" y="441.87" width="14" height="14" rx="1.5" fill="#85d8c1"/><rect x="783.66" y="458.34" width="14" height="14" rx="1.5" fill="#5bb79c"/><rect x="783.66" y="474.81" width="14" height="14" rx="1.5" fill="#85d8c1"/><rect x="783.66" y="491.28" width="14" height="14" rx="1.5" fill="#85d8c1"/><rect x="783.66" y="507.75" width="14" height="14" rx="1.5" fill="#85d8c1"/><rect x="783.66" y="524.22" width="14" height="14" rx="1.5" fill="#85d8c1"/><rect x="800.13" y="425.40" width="14" height="14" rx="1.5" fill="#85d8c1"/><rect x="800.13" y="441.87" width="14" height="14" rx="1.5" fill="#85d8c1"/><rect x="800.13" y="458.34" width="14" height="14" rx="1.5" fill="#85d8c1"/><rect x="800.13" y="474.81" width="14" height="14" rx="1.5" fill="#85d8c1"/><rect x="800.13" y="491.28" width="14" height="14" rx="1.5" fill="#85d8c1"/><rect x="800.13" y="507.75" width="14" height="14" rx="1.5" fill="#85d8c1"/><rect x="800.13" y="524.22" width="14" height="14" rx="1.5" fill="#5bb79c"/><rect x="816.60" y="425.40" width="14" height="14" rx="1.5" fill="#3f8d76"/><rect x="816.60" y="441.87" width="14" height="14" rx="1.5" fill="#5bb79c"/><rect x="816.60" y="458.34" width="14" height="14" rx="1.5" fill="#85d8c1"/><rect x="816.60" y="474.81" width="14" height="14" rx="1.5" fill="#85d8c1"/><rect x="816.60" y="491.28" width="14" height="14" rx="1.5" fill="#5bb79c"/><rect x="816.60" y="507.75" width="14" height="14" rx="1.5" fill="#85d8c1"/><rect x="816.60" y="524.22" width="14" height="14" rx="1.5" fill="#85d8c1"/><rect x="833.07" y="425.40" width="14" height="14" rx="1.5" fill="#85d8c1"/><rect x="833.07" y="441.87" width="14" height="14" rx="1.5" fill="#85d8c1"/><rect x="833.07" y="458.34" width="14" height="14" rx="1.5" fill="#85d8c1"/><rect x="833.07" y="474.81" width="14" height="14" rx="1.5" fill="#5bb79c"/><rect x="833.07" y="491.28" width="14" height="14" rx="1.5" fill="#85d8c1"/><rect x="833.07" y="507.75" width="14" height="14" rx="1.5" fill="#3f8d76"/><rect x="833.57" y="524.72" width="13" height="13" rx="2" fill="#eeeff1" stroke="#dadbde" stroke-width="1"/><rect x="849.54" y="425.40" width="14" height="14" rx="1.5" fill="#5bb79c"/><rect x="849.54" y="441.87" width="14" height="14" rx="1.5" fill="#85d8c1"/><rect x="849.54" y="458.34" width="14" height="14" rx="1.5" fill="#3f8d76"/><rect x="849.54" y="474.81" width="14" height="14" rx="1.5" fill="#85d8c1"/><rect x="849.54" y="491.28" width="14" height="14" rx="1.5" fill="#85d8c1"/><rect x="849.54" y="507.75" width="14" height="14" rx="1.5" fill="#85d8c1"/><rect x="849.54" y="524.22" width="14" height="14" rx="1.5" fill="#5bb79c"/><rect x="866.51" y="425.90" width="13" height="13" rx="2" fill="#eeeff1" stroke="#dadbde" stroke-width="1"/><rect x="866.01" y="441.87" width="14" height="14" rx="1.5" fill="#5bb79c"/><rect x="866.01" y="458.34" width="14" height="14" rx="1.5" fill="#3f8d76"/><rect x="866.51" y="475.31" width="13" height="13" rx="2" fill="#eeeff1" stroke="#dadbde" stroke-width="1"/><rect x="866.01" y="491.28" width="14" height="14" rx="1.5" fill="#85d8c1"/><rect x="866.01" y="507.75" width="14" height="14" rx="1.5" fill="#5bb79c"/><rect x="866.01" y="524.22" width="14" height="14" rx="1.5" fill="#85d8c1"/><rect x="882.48" y="425.40" width="14" height="14" rx="1.5" fill="#85d8c1"/><rect x="882.48" y="441.87" width="14" height="14" rx="1.5" fill="#85d8c1"/><rect x="882.48" y="458.34" width="14" height="14" rx="1.5" fill="#85d8c1"/><rect x="882.48" y="474.81" width="14" height="14" rx="1.5" fill="#5bb79c"/><rect x="882.48" y="491.28" width="14" height="14" rx="1.5" fill="#85d8c1"/><rect x="882.48" y="507.75" width="14" height="14" rx="1.5" fill="#85d8c1"/><rect x="882.98" y="524.72" width="13" height="13" rx="2" fill="#eeeff1" stroke="#dadbde" stroke-width="1"/><rect x="898.95" y="425.40" width="14" height="14" rx="1.5" fill="#3f8d76"/><rect x="898.95" y="441.87" width="14" height="14" rx="1.5" fill="#85d8c1"/><rect x="898.95" y="458.34" width="14" height="14" rx="1.5" fill="#5bb79c"/><rect x="898.95" y="474.81" width="14" height="14" rx="1.5" fill="#5bb79c"/><rect x="898.95" y="491.28" width="14" height="14" rx="1.5" fill="#3f8d76"/><rect x="898.95" y="507.75" width="14" height="14" rx="1.5" fill="#85d8c1"/><rect x="898.95" y="524.22" width="14" height="14" rx="1.5" fill="#3f8d76"/><rect x="915.42" y="425.40" width="14" height="14" rx="1.5" fill="#85d8c1"/><rect x="915.42" y="441.87" width="14" height="14" rx="1.5" fill="#5bb79c"/><rect x="915.42" y="458.34" width="14" height="14" rx="1.5" fill="#5bb79c"/><rect x="915.42" y="474.81" width="14" height="14" rx="1.5" fill="#85d8c1"/><rect x="915.42" y="491.28" width="14" height="14" rx="1.5" fill="#85d8c1"/><rect x="915.42" y="507.75" width="14" height="14" rx="1.5" fill="#5bb79c"/><rect x="915.42" y="524.22" width="14" height="14" rx="1.5" fill="#5bb79c"/><rect x="931.89" y="425.40" width="14" height="14" rx="1.5" fill="#85d8c1"/><rect x="931.89" y="441.87" width="14" height="14" rx="1.5" fill="#5bb79c"/><rect x="931.89" y="458.34" width="14" height="14" rx="1.5" fill="#3f8d76"/><rect x="931.89" y="474.81" width="14" height="14" rx="1.5" fill="#5bb79c"/><rect x="931.89" y="491.28" width="14" height="14" rx="1.5" fill="#3f8d76"/><rect x="931.89" y="507.75" width="14" height="14" rx="1.5" fill="#3f8d76"/><rect x="931.89" y="524.22" width="14" height="14" rx="1.5" fill="#3f8d76"/><rect x="948.36" y="425.40" width="14" height="14" rx="1.5" fill="#5bb79c"/><rect x="948.36" y="441.87" width="14" height="14" rx="1.5" fill="#5bb79c"/><rect x="948.36" y="458.34" width="14" height="14" rx="1.5" fill="#85d8c1"/><rect x="948.36" y="474.81" width="14" height="14" rx="1.5" fill="#5bb79c"/><rect x="948.36" y="491.28" width="14" height="14" rx="1.5" fill="#85d8c1"/><rect x="948.36" y="507.75" width="14" height="14" rx="1.5" fill="#5bb79c"/><rect x="948.36" y="524.22" width="14" height="14" rx="1.5" fill="#85d8c1"/><rect x="964.83" y="425.40" width="14" height="14" rx="1.5" fill="#85d8c1"/><rect x="964.83" y="441.87" width="14" height="14" rx="1.5" fill="#3f8d76"/><rect x="964.83" y="458.34" width="14" height="14" rx="1.5" fill="#5bb79c"/><rect x="964.83" y="474.81" width="14" height="14" rx="1.5" fill="#85d8c1"/><rect x="965.33" y="491.78" width="13" height="13" rx="2" fill="#eeeff1" stroke="#dadbde" stroke-width="1"/><rect x="965.33" y="508.25" width="13" height="13" rx="2" fill="#eeeff1" stroke="#dadbde" stroke-width="1"/><rect x="965.33" y="524.72" width="13" height="13" rx="2" fill="#eeeff1" stroke="#dadbde" stroke-width="1"/><rect x="981.80" y="425.90" width="13" height="13" rx="2" fill="#eeeff1" stroke="#dadbde" stroke-width="1"/><rect x="981.80" y="442.37" width="13" height="13" rx="2" fill="#eeeff1" stroke="#dadbde" stroke-width="1"/><rect x="981.80" y="458.84" width="13" height="13" rx="2" fill="#eeeff1" stroke="#dadbde" stroke-width="1"/><rect x="981.80" y="475.31" width="13" height="13" rx="2" fill="#eeeff1" stroke="#dadbde" stroke-width="1"/><rect x="981.80" y="491.78" width="13" height="13" rx="2" fill="#eeeff1" stroke="#dadbde" stroke-width="1"/><rect x="981.80" y="508.25" width="13" height="13" rx="2" fill="#eeeff1" stroke="#dadbde" stroke-width="1"/><rect x="981.80" y="524.72" width="13" height="13" rx="2" fill="#eeeff1" stroke="#dadbde" stroke-width="1"/><rect x="998.27" y="425.90" width="13" height="13" rx="2" fill="#eeeff1" stroke="#dadbde" stroke-width="1"/><rect x="998.27" y="442.37" width="13" height="13" rx="2" fill="#eeeff1" stroke="#dadbde" stroke-width="1"/><rect x="998.27" y="458.84" width="13" height="13" rx="2" fill="#eeeff1" stroke="#dadbde" stroke-width="1"/><rect x="998.27" y="475.31" width="13" height="13" rx="2" fill="#eeeff1" stroke="#dadbde" stroke-width="1"/><rect x="998.27" y="491.78" width="13" height="13" rx="2" fill="#eeeff1" stroke="#dadbde" stroke-width="1"/><rect x="998.27" y="508.25" width="13" height="13" rx="2" fill="#eeeff1" stroke="#dadbde" stroke-width="1"/><rect x="998.27" y="524.72" width="13" height="13" rx="2" fill="#eeeff1" stroke="#dadbde" stroke-width="1"/><rect x="1014.74" y="425.90" width="13" height="13" rx="2" fill="#eeeff1" stroke="#dadbde" stroke-width="1"/><rect x="1014.74" y="442.37" width="13" height="13" rx="2" fill="#eeeff1" stroke="#dadbde" stroke-width="1"/><rect x="1014.74" y="458.84" width="13" height="13" rx="2" fill="#eeeff1" stroke="#dadbde" stroke-width="1"/><rect x="1014.74" y="475.31" width="13" height="13" rx="2" fill="#eeeff1" stroke="#dadbde" stroke-width="1"/><rect x="1014.74" y="491.78" width="13" height="13" rx="2" fill="#eeeff1" stroke="#dadbde" stroke-width="1"/><rect x="1014.74" y="508.25" width="13" height="13" rx="2" fill="#eeeff1" stroke="#dadbde" stroke-width="1"/><rect x="1014.74" y="524.72" width="13" height="13" rx="2" fill="#eeeff1" stroke="#dadbde" stroke-width="1"/><rect x="1031.21" y="425.90" width="13" height="13" rx="2" fill="#eeeff1" stroke="#dadbde" stroke-width="1"/><rect x="1031.21" y="442.37" width="13" height="13" rx="2" fill="#eeeff1" stroke="#dadbde" stroke-width="1"/><rect x="1031.21" y="458.84" width="13" height="13" rx="2" fill="#eeeff1" stroke="#dadbde" stroke-width="1"/><rect x="1031.21" y="475.31" width="13" height="13" rx="2" fill="#eeeff1" stroke="#dadbde" stroke-width="1"/><rect x="1031.21" y="491.78" width="13" height="13" rx="2" fill="#eeeff1" stroke="#dadbde" stroke-width="1"/><rect x="1031.21" y="508.25" width="13" height="13" rx="2" fill="#eeeff1" stroke="#dadbde" stroke-width="1"/><rect x="1031.21" y="524.72" width="13" height="13" rx="2" fill="#eeeff1" stroke="#dadbde" stroke-width="1"/><rect x="1047.68" y="425.90" width="13" height="13" rx="2" fill="#eeeff1" stroke="#dadbde" stroke-width="1"/><rect x="1047.68" y="442.37" width="13" height="13" rx="2" fill="#eeeff1" stroke="#dadbde" stroke-width="1"/><rect x="1047.68" y="458.84" width="13" height="13" rx="2" fill="#eeeff1" stroke="#dadbde" stroke-width="1"/><rect x="1047.68" y="475.31" width="13" height="13" rx="2" fill="#eeeff1" stroke="#dadbde" stroke-width="1"/><rect x="1047.68" y="491.78" width="13" height="13" rx="2" fill="#eeeff1" stroke="#dadbde" stroke-width="1"/><rect x="1047.68" y="508.25" width="13" height="13" rx="2" fill="#eeeff1" stroke="#dadbde" stroke-width="1"/><rect x="1047.68" y="524.72" width="13" height="13" rx="2" fill="#eeeff1" stroke="#dadbde" stroke-width="1"/><rect x="1064.15" y="425.90" width="13" height="13" rx="2" fill="#eeeff1" stroke="#dadbde" stroke-width="1"/><rect x="1064.15" y="442.37" width="13" height="13" rx="2" fill="#eeeff1" stroke="#dadbde" stroke-width="1"/><rect x="1064.15" y="458.84" width="13" height="13" rx="2" fill="#eeeff1" stroke="#dadbde" stroke-width="1"/><rect x="1064.15" y="475.31" width="13" height="13" rx="2" fill="#eeeff1" stroke="#dadbde" stroke-width="1"/><rect x="1064.15" y="491.78" width="13" height="13" rx="2" fill="#eeeff1" stroke="#dadbde" stroke-width="1"/><rect x="1064.15" y="508.25" width="13" height="13" rx="2" fill="#eeeff1" stroke="#dadbde" stroke-width="1"/><rect x="1064.15" y="524.72" width="13" height="13" rx="2" fill="#eeeff1" stroke="#dadbde" stroke-width="1"/><rect x="1080.62" y="425.90" width="13" height="13" rx="2" fill="#eeeff1" stroke="#dadbde" stroke-width="1"/><rect x="1080.62" y="442.37" width="13" height="13" rx="2" fill="#eeeff1" stroke="#dadbde" stroke-width="1"/><rect x="1080.62" y="458.84" width="13" height="13" rx="2" fill="#eeeff1" stroke="#dadbde" stroke-width="1"/><rect x="1080.62" y="475.31" width="13" height="13" rx="2" fill="#eeeff1" stroke="#dadbde" stroke-width="1"/><rect x="1080.62" y="491.78" width="13" height="13" rx="2" fill="#eeeff1" stroke="#dadbde" stroke-width="1"/><rect x="1080.62" y="508.25" width="13" height="13" rx="2" fill="#eeeff1" stroke="#dadbde" stroke-width="1"/><rect x="1080.62" y="524.72" width="13" height="13" rx="2" fill="#eeeff1" stroke="#dadbde" stroke-width="1"/><rect x="1097.09" y="425.90" width="13" height="13" rx="2" fill="#eeeff1" stroke="#dadbde" stroke-width="1"/><rect x="1097.09" y="442.37" width="13" height="13" rx="2" fill="#eeeff1" stroke="#dadbde" stroke-width="1"/><rect x="1097.09" y="458.84" width="13" height="13" rx="2" fill="#eeeff1" stroke="#dadbde" stroke-width="1"/><rect x="1097.09" y="475.31" width="13" height="13" rx="2" fill="#eeeff1" stroke="#dadbde" stroke-width="1"/><rect x="1097.09" y="491.78" width="13" height="13" rx="2" fill="#eeeff1" stroke="#dadbde" stroke-width="1"/><rect x="1097.09" y="508.25" width="13" height="13" rx="2" fill="#eeeff1" stroke="#dadbde" stroke-width="1"/><rect x="1097.09" y="524.72" width="13" height="13" rx="2" fill="#eeeff1" stroke="#dadbde" stroke-width="1"/><rect x="1113.56" y="425.90" width="13" height="13" rx="2" fill="#eeeff1" stroke="#dadbde" stroke-width="1"/><rect x="1113.56" y="442.37" width="13" height="13" rx="2" fill="#eeeff1" stroke="#dadbde" stroke-width="1"/><rect x="1113.56" y="458.84" width="13" height="13" rx="2" fill="#eeeff1" stroke="#dadbde" stroke-width="1"/><rect x="1113.56" y="475.31" width="13" height="13" rx="2" fill="#eeeff1" stroke="#dadbde" stroke-width="1"/><rect x="1113.56" y="491.78" width="13" height="13" rx="2" fill="#eeeff1" stroke="#dadbde" stroke-width="1"/><rect x="1113.56" y="508.25" width="13" height="13" rx="2" fill="#eeeff1" stroke="#dadbde" stroke-width="1"/><rect x="1113.56" y="524.72" width="13" height="13" rx="2" fill="#eeeff1" stroke="#dadbde" stroke-width="1"/><rect x="1130.03" y="425.90" width="13" height="13" rx="2" fill="#eeeff1" stroke="#dadbde" stroke-width="1"/><rect x="1130.03" y="442.37" width="13" height="13" rx="2" fill="#eeeff1" stroke="#dadbde" stroke-width="1"/><rect x="1130.03" y="458.84" width="13" height="13" rx="2" fill="#eeeff1" stroke="#dadbde" stroke-width="1"/><rect x="1130.03" y="475.31" width="13" height="13" rx="2" fill="#eeeff1" stroke="#dadbde" stroke-width="1"/><rect x="1130.03" y="491.78" width="13" height="13" rx="2" fill="#eeeff1" stroke="#dadbde" stroke-width="1"/><rect x="1130.03" y="508.25" width="13" height="13" rx="2" fill="#eeeff1" stroke="#dadbde" stroke-width="1"/><rect x="1130.03" y="524.72" width="13" height="13" rx="2" fill="#eeeff1" stroke="#dadbde" stroke-width="1"/><rect x="1146.50" y="425.90" width="13" height="13" rx="2" fill="#eeeff1" stroke="#dadbde" stroke-width="1"/><rect x="1146.50" y="442.37" width="13" height="13" rx="2" fill="#eeeff1" stroke="#dadbde" stroke-width="1"/><rect x="1146.50" y="458.84" width="13" height="13" rx="2" fill="#eeeff1" stroke="#dadbde" stroke-width="1"/><rect x="1146.50" y="475.31" width="13" height="13" rx="2" fill="#eeeff1" stroke="#dadbde" stroke-width="1"/><rect x="1146.50" y="491.78" width="13" height="13" rx="2" fill="#eeeff1" stroke="#dadbde" stroke-width="1"/><rect x="1146.50" y="508.25" width="13" height="13" rx="2" fill="#eeeff1" stroke="#dadbde" stroke-width="1"/><rect x="1146.50" y="524.72" width="13" height="13" rx="2" fill="#eeeff1" stroke="#dadbde" stroke-width="1"/><rect x="1162.97" y="425.90" width="13" height="13" rx="2" fill="#eeeff1" stroke="#dadbde" stroke-width="1"/><rect x="1162.97" y="442.37" width="13" height="13" rx="2" fill="#eeeff1" stroke="#dadbde" stroke-width="1"/><rect x="1162.97" y="458.84" width="13" height="13" rx="2" fill="#eeeff1" stroke="#dadbde" stroke-width="1"/><rect x="1162.97" y="475.31" width="13" height="13" rx="2" fill="#eeeff1" stroke="#dadbde" stroke-width="1"/><rect x="1162.97" y="491.78" width="13" height="13" rx="2" fill="#eeeff1" stroke="#dadbde" stroke-width="1"/><rect x="1162.97" y="508.25" width="13" height="13" rx="2" fill="#eeeff1" stroke="#dadbde" stroke-width="1"/><rect x="1162.97" y="524.72" width="13" height="13" rx="2" fill="#eeeff1" stroke="#dadbde" stroke-width="1"/><rect x="1179.44" y="425.90" width="13" height="13" rx="2" fill="#eeeff1" stroke="#dadbde" stroke-width="1"/><rect x="1179.44" y="442.37" width="13" height="13" rx="2" fill="#eeeff1" stroke="#dadbde" stroke-width="1"/><rect x="1179.44" y="458.84" width="13" height="13" rx="2" fill="#eeeff1" stroke="#dadbde" stroke-width="1"/><rect x="1179.44" y="475.31" width="13" height="13" rx="2" fill="#eeeff1" stroke="#dadbde" stroke-width="1"/><rect x="1179.44" y="491.78" width="13" height="13" rx="2" fill="#eeeff1" stroke="#dadbde" stroke-width="1"/><rect x="1179.44" y="508.25" width="13" height="13" rx="2" fill="#eeeff1" stroke="#dadbde" stroke-width="1"/><rect x="1179.44" y="524.72" width="13" height="13" rx="2" fill="#eeeff1" stroke="#dadbde" stroke-width="1"/><rect x="1195.91" y="425.90" width="13" height="13" rx="2" fill="#eeeff1" stroke="#dadbde" stroke-width="1"/><rect x="1195.91" y="442.37" width="13" height="13" rx="2" fill="#eeeff1" stroke="#dadbde" stroke-width="1"/><rect x="1195.91" y="458.84" width="13" height="13" rx="2" fill="#eeeff1" stroke="#dadbde" stroke-width="1"/><rect x="1195.91" y="475.31" width="13" height="13" rx="2" fill="#eeeff1" stroke="#dadbde" stroke-width="1"/><rect x="1195.91" y="491.78" width="13" height="13" rx="2" fill="#eeeff1" stroke="#dadbde" stroke-width="1"/><rect x="1195.91" y="508.25" width="13" height="13" rx="2" fill="#eeeff1" stroke="#dadbde" stroke-width="1"/><rect x="1195.91" y="524.72" width="13" height="13" rx="2" fill="#eeeff1" stroke="#dadbde" stroke-width="1"/><rect x="1212.38" y="425.90" width="13" height="13" rx="2" fill="#eeeff1" stroke="#dadbde" stroke-width="1"/><rect x="1212.38" y="442.37" width="13" height="13" rx="2" fill="#eeeff1" stroke="#dadbde" stroke-width="1"/><rect x="1212.38" y="458.84" width="13" height="13" rx="2" fill="#eeeff1" stroke="#dadbde" stroke-width="1"/><rect x="1212.38" y="475.31" width="13" height="13" rx="2" fill="#eeeff1" stroke="#dadbde" stroke-width="1"/><rect x="1212.38" y="491.78" width="13" height="13" rx="2" fill="#eeeff1" stroke="#dadbde" stroke-width="1"/><rect x="1212.38" y="508.25" width="13" height="13" rx="2" fill="#eeeff1" stroke="#dadbde" stroke-width="1"/><rect x="1212.38" y="524.72" width="13" height="13" rx="2" fill="#eeeff1" stroke="#dadbde" stroke-width="1"/><rect x="1228.85" y="425.90" width="13" height="13" rx="2" fill="#eeeff1" stroke="#dadbde" stroke-width="1"/><rect x="1228.85" y="442.37" width="13" height="13" rx="2" fill="#eeeff1" stroke="#dadbde" stroke-width="1"/><rect x="1228.85" y="458.84" width="13" height="13" rx="2" fill="#eeeff1" stroke="#dadbde" stroke-width="1"/><rect x="1228.85" y="475.31" width="13" height="13" rx="2" fill="#eeeff1" stroke="#dadbde" stroke-width="1"/><rect x="1228.85" y="491.78" width="13" height="13" rx="2" fill="#eeeff1" stroke="#dadbde" stroke-width="1"/><rect x="1228.85" y="508.25" width="13" height="13" rx="2" fill="#eeeff1" stroke="#dadbde" stroke-width="1"/><rect x="1228.85" y="524.72" width="13" height="13" rx="2" fill="#eeeff1" stroke="#dadbde" stroke-width="1"/><rect x="1245.32" y="425.90" width="13" height="13" rx="2" fill="#eeeff1" stroke="#dadbde" stroke-width="1"/><rect x="1245.32" y="442.37" width="13" height="13" rx="2" fill="#eeeff1" stroke="#dadbde" stroke-width="1"/><rect x="1245.32" y="458.84" width="13" height="13" rx="2" fill="#eeeff1" stroke="#dadbde" stroke-width="1"/><rect x="1245.32" y="475.31" width="13" height="13" rx="2" fill="#eeeff1" stroke="#dadbde" stroke-width="1"/><rect x="1245.32" y="491.78" width="13" height="13" rx="2" fill="#eeeff1" stroke="#dadbde" stroke-width="1"/><rect x="1245.32" y="508.25" width="13" height="13" rx="2" fill="#eeeff1" stroke="#dadbde" stroke-width="1"/><rect x="1245.32" y="524.72" width="13" height="13" rx="2" fill="#eeeff1" stroke="#dadbde" stroke-width="1"/><rect x="1261.79" y="425.90" width="13" height="13" rx="2" fill="#eeeff1" stroke="#dadbde" stroke-width="1"/><rect x="1261.79" y="442.37" width="13" height="13" rx="2" fill="#eeeff1" stroke="#dadbde" stroke-width="1"/><rect x="1261.79" y="458.84" width="13" height="13" rx="2" fill="#eeeff1" stroke="#dadbde" stroke-width="1"/><rect x="1261.79" y="475.31" width="13" height="13" rx="2" fill="#eeeff1" stroke="#dadbde" stroke-width="1"/><rect x="1261.79" y="491.78" width="13" height="13" rx="2" fill="#eeeff1" stroke="#dadbde" stroke-width="1"/><rect x="1261.79" y="508.25" width="13" height="13" rx="2" fill="#eeeff1" stroke="#dadbde" stroke-width="1"/><rect x="1261.79" y="524.72" width="13" height="13" rx="2" fill="#eeeff1" stroke="#dadbde" stroke-width="1"/><rect x="1278.26" y="425.90" width="13" height="13" rx="2" fill="#eeeff1" stroke="#dadbde" stroke-width="1"/><rect x="1278.26" y="442.37" width="13" height="13" rx="2" fill="#eeeff1" stroke="#dadbde" stroke-width="1"/><rect x="1278.26" y="458.84" width="13" height="13" rx="2" fill="#eeeff1" stroke="#dadbde" stroke-width="1"/><rect x="1278.26" y="475.31" width="13" height="13" rx="2" fill="#eeeff1" stroke="#dadbde" stroke-width="1"/><rect x="1278.26" y="491.78" width="13" height="13" rx="2" fill="#eeeff1" stroke="#dadbde" stroke-width="1"/><rect x="1278.26" y="508.25" width="13" height="13" rx="2" fill="#eeeff1" stroke="#dadbde" stroke-width="1"/><rect x="1278.26" y="524.72" width="13" height="13" rx="2" fill="#eeeff1" stroke="#dadbde" stroke-width="1"/><rect x="1294.73" y="425.90" width="13" height="13" rx="2" fill="#eeeff1" stroke="#dadbde" stroke-width="1"/><rect x="1294.73" y="442.37" width="13" height="13" rx="2" fill="#eeeff1" stroke="#dadbde" stroke-width="1"/><rect x="1294.73" y="458.84" width="13" height="13" rx="2" fill="#eeeff1" stroke="#dadbde" stroke-width="1"/><rect x="1294.73" y="475.31" width="13" height="13" rx="2" fill="#eeeff1" stroke="#dadbde" stroke-width="1"/><rect x="1294.73" y="491.78" width="13" height="13" rx="2" fill="#eeeff1" stroke="#dadbde" stroke-width="1"/><rect x="1294.73" y="508.25" width="13" height="13" rx="2" fill="#eeeff1" stroke="#dadbde" stroke-width="1"/><rect x="1294.73" y="524.72" width="13" height="13" rx="2" fill="#eeeff1" stroke="#dadbde" stroke-width="1"/><rect x="1311.20" y="425.90" width="13" height="13" rx="2" fill="#eeeff1" stroke="#dadbde" stroke-width="1"/><rect x="1311.20" y="442.37" width="13" height="13" rx="2" fill="#eeeff1" stroke="#dadbde" stroke-width="1"/><rect x="1311.20" y="458.84" width="13" height="13" rx="2" fill="#eeeff1" stroke="#dadbde" stroke-width="1"/><rect x="1311.20" y="475.31" width="13" height="13" rx="2" fill="#eeeff1" stroke="#dadbde" stroke-width="1"/><rect x="1311.20" y="491.78" width="13" height="13" rx="2" fill="#eeeff1" stroke="#dadbde" stroke-width="1"/><rect x="1311.20" y="508.25" width="13" height="13" rx="2" fill="#eeeff1" stroke="#dadbde" stroke-width="1"/><rect x="1311.20" y="524.72" width="13" height="13" rx="2" fill="#eeeff1" stroke="#dadbde" stroke-width="1"/><rect x="1327.67" y="425.90" width="13" height="13" rx="2" fill="#eeeff1" stroke="#dadbde" stroke-width="1"/><rect x="1327.67" y="442.37" width="13" height="13" rx="2" fill="#eeeff1" stroke="#dadbde" stroke-width="1"/><rect x="1327.67" y="458.84" width="13" height="13" rx="2" fill="#eeeff1" stroke="#dadbde" stroke-width="1"/><rect x="1327.67" y="475.31" width="13" height="13" rx="2" fill="#eeeff1" stroke="#dadbde" stroke-width="1"/><rect x="1327.67" y="491.78" width="13" height="13" rx="2" fill="#eeeff1" stroke="#dadbde" stroke-width="1"/><rect x="1327.67" y="508.25" width="13" height="13" rx="2" fill="#eeeff1" stroke="#dadbde" stroke-width="1"/><rect x="1327.67" y="524.72" width="13" height="13" rx="2" fill="#eeeff1" stroke="#dadbde" stroke-width="1"/><rect x="1344.14" y="425.90" width="13" height="13" rx="2" fill="#eeeff1" stroke="#dadbde" stroke-width="1"/><rect x="1344.14" y="442.37" width="13" height="13" rx="2" fill="#eeeff1" stroke="#dadbde" stroke-width="1"/><rect x="1344.14" y="458.84" width="13" height="13" rx="2" fill="#eeeff1" stroke="#dadbde" stroke-width="1"/><rect x="1344.14" y="475.31" width="13" height="13" rx="2" fill="#eeeff1" stroke="#dadbde" stroke-width="1"/><rect x="1344.14" y="491.78" width="13" height="13" rx="2" fill="#eeeff1" stroke="#dadbde" stroke-width="1"/><rect x="1344.14" y="508.25" width="13" height="13" rx="2" fill="#eeeff1" stroke="#dadbde" stroke-width="1"/><rect x="1344.14" y="524.72" width="13" height="13" rx="2" fill="#eeeff1" stroke="#dadbde" stroke-width="1"/></svg>
<div class="abs" style="left:487.5px;top:548px;font-size:14.3px;line-height:18px;color:#5a5e65;white-space:nowrap">Less</div>
<div class="abs" style="left:665.5px;top:548px;font-size:14.3px;line-height:18px;color:#5a5e65;white-space:nowrap">More</div>
<svg class="abs" style="left:520px;top:540px" width="145" height="32" viewBox="520 540 145 32">
<rect x="526.5" y="547" width="18.5" height="18.5" rx="2" fill="#eeeff1" stroke="#d8d9dc" stroke-width="1"/>
<rect x="554.5" y="546.6" width="19.5" height="19.5" rx="1.5" fill="#85d8c1"/>
<rect x="582.5" y="546.6" width="19.5" height="19.5" rx="1.5" fill="#5bb79c"/>
<rect x="610.5" y="546.6" width="19.5" height="19.5" rx="1.5" fill="#3f8d76"/>
<rect x="638.5" y="546.6" width="19.5" height="19.5" rx="1.5" fill="#173f33"/>
</svg>
<div class="card" style="left:1390px;top:342px;width:443px;height:241px;border-radius:20px;box-shadow:0 2px 6px rgba(0,0,0,0.09),0 0 0 1px rgba(0,0,0,0.02)"></div>
<svg class="abs" style="left:1420px;top:362px" width="28" height="30" viewBox="0 0 28 30"><path d="M8.7 8.5Q9.6 13.8 14.6 15.3Q9.6 16.8 8.7 22Q7.8 16.8 2.8 15.3Q7.8 13.8 8.7 8.5Z" fill="#2b7d62" stroke="#2b7d62" stroke-width="1.4" stroke-linejoin="round"/><path d="M19.7 3.6Q20.3 7.3 23.6 8Q20.3 8.7 19.7 12.3Q19.1 8.7 15.8 8Q19.1 7.3 19.7 3.6Z" fill="#2b7d62" stroke="#2b7d62" stroke-width="1.2" stroke-linejoin="round"/><path d="M17.2 18.6Q17.7 21.6 20.4 22.1Q17.7 22.6 17.2 25.8Q16.7 22.6 14 22.1Q16.7 21.6 17.2 18.6Z" fill="#2b7d62" stroke="#2b7d62" stroke-width="1.2" stroke-linejoin="round"/></svg>
<div class="abs" style="left:1454px;top:368.5px;font-size:15.8px;line-height:18px;font-weight:700;color:#15181d;white-space:nowrap">AI Affiliate Insights</div>
<svg class="abs" style="left:1791px;top:370px" width="8" height="18" viewBox="0 0 8 18"><circle cx="4" cy="3.5" r="1.7" fill="#222"/><circle cx="4" cy="9.2" r="1.7" fill="#222"/><circle cx="4" cy="14.9" r="1.7" fill="#222"/></svg>
<div class="abs" style="left:1422px;top:406px;width:379px;height:129px;border-radius:6px;background:#f8f9fb"></div>
<div class="abs" style="left:1438px;top:421px;font-size:18px;line-height:22px;font-weight:700;color:#111418;white-space:nowrap">Likely</div>
<div class="abs" style="left:1515.5px;top:421px;font-size:18.6px;line-height:22px;font-weight:700;color:#111418;white-space:nowrap">Tax-Free Weekend winners</div>
<svg class="abs" style="left:1492px;top:423px" width="20" height="18" viewBox="0 0 20 18"><path d="M1.5 2.5Q5 1 8 4L6 7.5Q3 6.5 1.5 2.5Z" fill="#b9bac4"/><path d="M18.5 15.5Q15 17 12.5 14L14.5 10Q17.5 11.5 18.5 15.5Z" fill="#b9bac4"/><path d="M2 11.4L7.3 16.3 18 4.8 12.7 1Z" fill="#dfe6f0" stroke="#3e3b4d" stroke-width="1.1" stroke-linejoin="round"/><path d="M7.6 6.4L12.3 10.4 10.4 12.5 5.7 8.5Z" fill="#e9c25c"/><circle cx="9" cy="9.5" r="1.4" fill="#2e2c3a"/></svg>
<div class="abs" style="left:1438px;top:456.7px;font-size:12px;line-height:14px;font-weight:700;color:#2a7a5e;white-space:nowrap">STEM Robotics Kits for Kids S...</div>
<div class="abs" style="left:1438px;top:480.7px;font-size:12px;line-height:14px;font-weight:700;color:#2a7a5e;white-space:nowrap">STEM Robotics Science Kits fo...</div>
<div class="abs" style="left:1438px;top:504.5px;font-size:12px;line-height:14px;font-weight:700;color:#2a7a5e;white-space:nowrap">STEM Science Kits for Kids 5-...</div>
<div class="abs" style="left:1413.5px;top:551.5px;font-size:11.7px;line-height:14px;color:#4a4e55;white-space:nowrap">1 of 10</div>
<svg class="abs" style="left:1752px;top:545px" width="14" height="16" viewBox="0 0 14 16"><path d="M9.5 3L4.5 8l5 5" fill="none" stroke="#15181d" stroke-width="1.6"/></svg>
<svg class="abs" style="left:1789px;top:545px" width="14" height="16" viewBox="0 0 14 16"><path d="M4.5 3l5 5-5 5" fill="none" stroke="#15181d" stroke-width="1.6"/></svg>
<div class="card" style="left:471px;top:598px;width:903px;height:520px"></div>
<div class="abs" style="left:488px;top:621px;font-size:16px;line-height:18px;font-weight:700;color:#1d2026;white-space:nowrap">Content Clicks Overview</div>
<div class="abs" style="left:1262.5px;top:614.5px;width:95px;height:30px;border:1px solid #8c8f94;border-radius:4px;background:#fff"></div><div class="abs" style="left:1271.5px;top:620.5px;font-size:14.5px;line-height:18px;color:#1e2329;white-space:nowrap">90 Days</div><svg class="abs" style="left:1337.5px;top:625.5px" width="12" height="8" viewBox="0 0 12 8"><path d="M1.5 1.5L6 6l4.5-4.5" fill="none" stroke="#1e2329" stroke-width="1.5"/></svg>
<div class="abs" style="left:488px;top:653px;font-size:14.8px;line-height:18px;color:#62666d;white-space:nowrap">Total Clicks</div>
<div class="abs" style="left:487px;top:678px;font-size:25px;line-height:28px;font-weight:700;color:#2a2e35;white-space:nowrap;letter-spacing:0.8px">544</div>
<div class="abs" style="left:488px;top:712px;width:76px;height:16px;border-radius:6px;background:#e3f7eb"></div>
<svg class="abs" style="left:492px;top:715px" width="14" height="10" viewBox="0 0 14 10"><path d="M1 8.5l4-4 3 2.5L12.5 2M9 1.8h3.8v3.7" fill="none" stroke="#1f4f3e" stroke-width="1.4"/></svg>
<div class="abs" style="left:510px;top:712px;font-size:12.2px;line-height:16px;color:#24604b;white-space:nowrap">+291</div>
<div class="abs" style="left:612.5px;top:653px;font-size:14.8px;line-height:18px;color:#62666d;white-space:nowrap">Total Views</div>
<div class="abs" style="left:611.5px;top:678px;font-size:25px;line-height:28px;font-weight:700;color:#2a2e35;white-space:nowrap;letter-spacing:-2.2px">15.1k</div>
<div class="abs" style="left:612.5px;top:712px;width:75px;height:16px;border-radius:6px;background:#e3f7eb"></div>
<svg class="abs" style="left:616.5px;top:715px" width="14" height="10" viewBox="0 0 14 10"><path d="M1 8.5l4-4 3 2.5L12.5 2M9 1.8h3.8v3.7" fill="none" stroke="#1f4f3e" stroke-width="1.4"/></svg>
<div class="abs" style="left:634.5px;top:712px;font-size:12.2px;line-height:16px;color:#24604b;white-space:nowrap">+7292</div>
<div class="abs" style="left:737px;top:653px;font-size:14.8px;line-height:18px;color:#62666d;white-space:nowrap">Total CTR</div>
<div class="abs" style="left:736px;top:678px;font-size:25px;line-height:28px;font-weight:700;color:#2a2e35;white-space:nowrap;letter-spacing:-0.8px">3.6%</div>
<div class="abs" style="left:737px;top:712px;width:77.5px;height:16px;border-radius:6px;background:#e3f7eb"></div>
<svg class="abs" style="left:741px;top:715px" width="14" height="10" viewBox="0 0 14 10"><path d="M1 8.5l4-4 3 2.5L12.5 2M9 1.8h3.8v3.7" fill="none" stroke="#1f4f3e" stroke-width="1.4"/></svg>
<div class="abs" style="left:759px;top:712px;font-size:12.2px;line-height:16px;color:#24604b;white-space:nowrap">+11.35%</div>
<div class="abs" style="left:587.5px;top:652px;width:1px;height:76px;background:#e6e8eb"></div>
<div class="abs" style="left:712px;top:652px;width:1px;height:76px;background:#e6e8eb"></div>
<svg class="abs" style="left:471px;top:740px" width="903" height="340" viewBox="471 740 903 340"><line x1="523.5" x2="1358" y1="753.50" y2="753.50" stroke="#e8e8e8" stroke-width="1"/><line x1="523.5" x2="1358" y1="799.13" y2="799.13" stroke="#e8e8e8" stroke-width="1"/><line x1="523.5" x2="1358" y1="844.76" y2="844.76" stroke="#e8e8e8" stroke-width="1"/><line x1="523.5" x2="1358" y1="890.39" y2="890.39" stroke="#e8e8e8" stroke-width="1"/><line x1="523.5" x2="1358" y1="936.02" y2="936.02" stroke="#e8e8e8" stroke-width="1"/><line x1="523.5" x2="1358" y1="981.65" y2="981.65" stroke="#e8e8e8" stroke-width="1"/><line x1="523.5" x2="1358" y1="1027.28" y2="1027.28" stroke="#e8e8e8" stroke-width="1"/><line x1="523.5" x2="1358" y1="1072.91" y2="1072.91" stroke="#e8e8e8" stroke-width="1"/><line x1="531.5" x2="531.5" y1="753.5" y2="1080" stroke="#e8e8e8" stroke-width="1"/><path d="M617.5 1080V772.0Q617.5 769.5 620.0 769.5H673.5Q676.1 769.5 676.1 772.0V1080Z" fill="#234f60"/><path d="M783 1080V785.8Q783 783.3 785.5 783.3H839Q841.6 783.3 841.6 785.8V1080Z" fill="#234f60"/><path d="M948.7 1080V759.6Q948.7 757.1 951.2 757.1H1004.7Q1007.3000000000001 757.1 1007.3000000000001 759.6V1080Z" fill="#234f60"/><path d="M1114.3 1080V789.0Q1114.3 786.5 1116.8 786.5H1170.3Q1172.8999999999999 786.5 1172.8999999999999 789.0V1080Z" fill="#234f60"/></svg>
<div class="abs" style="left:440px;width:80px;text-align:right;top:746.0px;font-size:12px;line-height:14px;color:#555a60;white-space:nowrap">4,000</div>
<div class="abs" style="left:440px;width:80px;text-align:right;top:791.6px;font-size:12px;line-height:14px;color:#555a60;white-space:nowrap">3,500</div>
<div class="abs" style="left:440px;width:80px;text-align:right;top:837.3px;font-size:12px;line-height:14px;color:#555a60;white-space:nowrap">3,000</div>
<div class="abs" style="left:440px;width:80px;text-align:right;top:882.9px;font-size:12px;line-height:14px;color:#555a60;white-space:nowrap">2,500</div>
<div class="abs" style="left:440px;width:80px;text-align:right;top:928.5px;font-size:12px;line-height:14px;color:#555a60;white-space:nowrap">2,000</div>
<div class="abs" style="left:440px;width:80px;text-align:right;top:974.1px;font-size:12px;line-height:14px;color:#555a60;white-space:nowrap">1,500</div>
<div class="abs" style="left:440px;width:80px;text-align:right;top:1019.8px;font-size:12px;line-height:14px;color:#555a60;white-space:nowrap">1,000</div>
<div class="abs" style="left:440px;width:80px;text-align:right;top:1065.4px;font-size:12px;line-height:14px;color:#555a60;white-space:nowrap">500</div>
<div class="card" style="left:1390px;top:598px;width:443px;height:281px"></div>
<div class="abs" style="left:1406px;top:621px;font-size:16px;line-height:18px;font-weight:700;color:#1d2026;white-space:nowrap">Best Days (Content Clicks)</div>
<div class="abs" style="left:1721.5px;top:614.5px;width:95px;height:30px;border:1px solid #8c8f94;border-radius:4px;background:#fff"></div><div class="abs" style="left:1730.5px;top:620.5px;font-size:14.5px;line-height:18px;color:#1e2329;white-space:nowrap">90 Days</div><svg class="abs" style="left:1796.5px;top:625.5px" width="12" height="8" viewBox="0 0 12 8"><path d="M1.5 1.5L6 6l4.5-4.5" fill="none" stroke="#1e2329" stroke-width="1.5"/></svg>
<svg class="abs" style="left:1390px;top:650px" width="443" height="200" viewBox="1390 650 443 200"><line x1="1425.5" x2="1817" y1="822.80" y2="822.80" stroke="#e8e8e8" stroke-width="1"/><line x1="1425.5" x2="1817" y1="804.93" y2="804.93" stroke="#e8e8e8" stroke-width="1"/><line x1="1425.5" x2="1817" y1="787.06" y2="787.06" stroke="#e8e8e8" stroke-width="1"/><line x1="1425.5" x2="1817" y1="769.19" y2="769.19" stroke="#e8e8e8" stroke-width="1"/><line x1="1425.5" x2="1817" y1="751.32" y2="751.32" stroke="#e8e8e8" stroke-width="1"/><line x1="1425.5" x2="1817" y1="733.45" y2="733.45" stroke="#e8e8e8" stroke-width="1"/><line x1="1425.5" x2="1817" y1="715.58" y2="715.58" stroke="#e8e8e8" stroke-width="1"/><line x1="1425.5" x2="1817" y1="697.71" y2="697.71" stroke="#e8e8e8" stroke-width="1"/><line x1="1425.5" x2="1817" y1="679.84" y2="679.84" stroke="#e8e8e8" stroke-width="1"/><line x1="1425.5" x2="1817" y1="661.97" y2="661.97" stroke="#e8e8e8" stroke-width="1"/><line x1="1433.5" x2="1433.5" y1="662" y2="823" stroke="#e8e8e8" stroke-width="1"/><path d="M1441.0 822.5V723.9Q1441.0 720.9 1444.0 720.9H1477.0Q1480.0 720.9 1480.0 723.9V822.5Z" fill="#48b4a2"/><path d="M1495.7 822.5V698.9Q1495.7 695.9 1498.7 695.9H1531.7Q1534.7 695.9 1534.7 698.9V822.5Z" fill="#48b4a2"/><path d="M1550.4 822.5V679.3Q1550.4 676.3 1553.4 676.3H1586.4Q1589.4 676.3 1589.4 679.3V822.5Z" fill="#48b4a2"/><path d="M1605.1 822.5V741.8Q1605.1 738.8 1608.1 738.8H1641.1Q1644.1 738.8 1644.1 741.8V822.5Z" fill="#48b4a2"/><path d="M1659.8 822.5V729.3Q1659.8 726.3 1662.8 726.3H1695.8Q1698.8 726.3 1698.8 729.3V822.5Z" fill="#48b4a2"/><path d="M1714.5 822.5V716.8Q1714.5 713.8 1717.5 713.8H1750.5Q1753.5 713.8 1753.5 716.8V822.5Z" fill="#48b4a2"/><path d="M1769.2 822.5V715.0Q1769.2 712.0 1772.2 712.0H1805.2Q1808.2 712.0 1808.2 715.0V822.5Z" fill="#48b4a2"/></svg>
<div class="abs" style="left:1380px;width:42px;text-align:right;top:815.3px;font-size:12px;line-height:14px;color:#555a60">0</div>
<div class="abs" style="left:1380px;width:42px;text-align:right;top:797.4px;font-size:12px;line-height:14px;color:#555a60">10</div>
<div class="abs" style="left:1380px;width:42px;text-align:right;top:779.6px;font-size:12px;line-height:14px;color:#555a60">20</div>
<div class="abs" style="left:1380px;width:42px;text-align:right;top:761.7px;font-size:12px;line-height:14px;color:#555a60">30</div>
<div class="abs" style="left:1380px;width:42px;text-align:right;top:743.8px;font-size:12px;line-height:14px;color:#555a60">40</div>
<div class="abs" style="left:1380px;width:42px;text-align:right;top:725.9px;font-size:12px;line-height:14px;color:#555a60">50</div>
<div class="abs" style="left:1380px;width:42px;text-align:right;top:708.1px;font-size:12px;line-height:14px;color:#555a60">60</div>
<div class="abs" style="left:1380px;width:42px;text-align:right;top:690.2px;font-size:12px;line-height:14px;color:#555a60">70</div>
<div class="abs" style="left:1380px;width:42px;text-align:right;top:672.3px;font-size:12px;line-height:14px;color:#555a60">80</div>
<div class="abs" style="left:1380px;width:42px;text-align:right;top:654.5px;font-size:12px;line-height:14px;color:#555a60">90</div>
<div class="abs" style="left:1435.5px;width:50px;text-align:center;top:833px;font-size:12px;line-height:14px;color:#555a60">Mon</div>
<div class="abs" style="left:1490.2px;width:50px;text-align:center;top:833px;font-size:12px;line-height:14px;color:#555a60">Tue</div>
<div class="abs" style="left:1544.9px;width:50px;text-align:center;top:833px;font-size:12px;line-height:14px;color:#555a60">Wed</div>
<div class="abs" style="left:1599.6px;width:50px;text-align:center;top:833px;font-size:12px;line-height:14px;color:#555a60">Thu</div>
<div class="abs" style="left:1654.3px;width:50px;text-align:center;top:833px;font-size:12px;line-height:14px;color:#555a60">Fri</div>
<div class="abs" style="left:1709.0px;width:50px;text-align:center;top:833px;font-size:12px;line-height:14px;color:#555a60">Sat</div>
<div class="abs" style="left:1763.7px;width:50px;text-align:center;top:833px;font-size:12px;line-height:14px;color:#555a60">Sun</div>
<div class="card" style="left:1390px;top:895px;width:443px;height:220px"></div>
<div class="abs" style="left:1406px;top:918px;font-size:16px;line-height:18px;font-weight:700;color:#1d2026;white-space:nowrap">Best Hours (Content Clicks)</div>
<div class="abs" style="left:1721.5px;top:911px;width:95px;height:30px;border:1px solid #8c8f94;border-radius:4px;background:#fff"></div><div class="abs" style="left:1730.5px;top:917px;font-size:14.5px;line-height:18px;color:#1e2329;white-space:nowrap">90 Days</div><svg class="abs" style="left:1796.5px;top:922px" width="12" height="8" viewBox="0 0 12 8"><path d="M1.5 1.5L6 6l4.5-4.5" fill="none" stroke="#1e2329" stroke-width="1.5"/></svg>
<svg class="abs" style="left:1390px;top:945px" width="443" height="135" viewBox="1390 945 443 135"><line x1="1425.5" x2="1817" y1="958.20" y2="958.20" stroke="#e8e8e8" stroke-width="1"/><line x1="1425.5" x2="1817" y1="975.67" y2="975.67" stroke="#e8e8e8" stroke-width="1"/><line x1="1425.5" x2="1817" y1="993.14" y2="993.14" stroke="#e8e8e8" stroke-width="1"/><line x1="1425.5" x2="1817" y1="1010.61" y2="1010.61" stroke="#e8e8e8" stroke-width="1"/><line x1="1425.5" x2="1817" y1="1028.08" y2="1028.08" stroke="#e8e8e8" stroke-width="1"/><line x1="1425.5" x2="1817" y1="1045.55" y2="1045.55" stroke="#e8e8e8" stroke-width="1"/><line x1="1425.5" x2="1817" y1="1063.02" y2="1063.02" stroke="#e8e8e8" stroke-width="1"/><line x1="1425.5" x2="1817" y1="1080.49" y2="1080.49" stroke="#e8e8e8" stroke-width="1"/><line x1="1433.5" x2="1433.5" y1="958" y2="1080" stroke="#e8e8e8" stroke-width="1"/><path d="M1435.8 1080V1007.7Q1435.8 1003.7 1439.8 1003.7H1442.5Q1446.5 1003.7 1446.5 1007.7V1080Z" fill="#60a5f4"/><path d="M1451.8 1080V1025.1Q1451.8 1021.1 1455.8 1021.1H1458.5Q1462.5 1021.1 1462.5 1025.1V1080Z" fill="#60a5f4"/><path d="M1467.8 1080V1018.1Q1467.8 1014.1 1471.8 1014.1H1474.5Q1478.5 1014.1 1478.5 1018.1V1080Z" fill="#60a5f4"/><path d="M1483.8 1080V1039.1Q1483.8 1035.1 1487.8 1035.1H1490.5Q1494.5 1035.1 1494.5 1039.1V1080Z" fill="#60a5f4"/><path d="M1499.8 1080V1021.6Q1499.8 1017.6 1503.8 1017.6H1506.5Q1510.5 1017.6 1510.5 1021.6V1080Z" fill="#60a5f4"/><path d="M1515.8 1080V1046.1Q1515.8 1042.1 1519.8 1042.1H1522.5Q1526.5 1042.1 1526.5 1046.1V1080Z" fill="#60a5f4"/><path d="M1531.9 1080V1053.1Q1531.9 1049.1 1535.9 1049.1H1538.6Q1542.6 1049.1 1542.6 1053.1V1080Z" fill="#f5ba3e"/><path d="M1547.9 1080V1074.0Q1547.9 1070.0 1551.9 1070.0H1554.6Q1558.6 1070.0 1558.6 1074.0V1080Z" fill="#f5ba3e"/><path d="M1595.9 1080V1042.6Q1595.9 1038.6 1599.9 1038.6H1602.6Q1606.6 1038.6 1606.6 1042.6V1080Z" fill="#f5ba3e"/><path d="M1611.9 1080V1046.1Q1611.9 1042.1 1615.9 1042.1H1618.6Q1622.6 1042.1 1622.6 1046.1V1080Z" fill="#f5ba3e"/><path d="M1627.9 1080V1028.6Q1627.9 1024.6 1631.9 1024.6H1634.6Q1638.6 1024.6 1638.6 1028.6V1080Z" fill="#f5ba3e"/><path d="M1643.9 1080V1028.6Q1643.9 1024.6 1647.9 1024.6H1650.6Q1654.6 1024.6 1654.6 1028.6V1080Z" fill="#f5ba3e"/><path d="M1659.9 1080V997.2Q1659.9 993.2 1663.9 993.2H1666.6Q1670.6 993.2 1670.6 997.2V1080Z" fill="#f5ba3e"/><path d="M1676.0 1080V1053.1Q1676.0 1049.1 1680.0 1049.1H1682.7Q1686.7 1049.1 1686.7 1053.1V1080Z" fill="#f5ba3e"/><path d="M1692.0 1080V1035.6Q1692.0 1031.6 1696.0 1031.6H1698.7Q1702.7 1031.6 1702.7 1035.6V1080Z" fill="#f5ba3e"/><path d="M1708.0 1080V1032.1Q1708.0 1028.1 1712.0 1028.1H1714.7Q1718.7 1028.1 1718.7 1032.1V1080Z" fill="#f5ba3e"/><path d="M1724.0 1080V993.7Q1724.0 989.7 1728.0 989.7H1730.7Q1734.7 989.7 1734.7 993.7V1080Z" fill="#60a5f4"/><path d="M1740.0 1080V1042.6Q1740.0 1038.6 1744.0 1038.6H1746.7Q1750.7 1038.6 1750.7 1042.6V1080Z" fill="#60a5f4"/><path d="M1756.0 1080V976.2Q1756.0 972.2 1760.0 972.2H1762.7Q1766.7 972.2 1766.7 976.2V1080Z" fill="#60a5f4"/><path d="M1772.0 1080V1056.6Q1772.0 1052.6 1776.0 1052.6H1778.7Q1782.7 1052.6 1782.7 1056.6V1080Z" fill="#60a5f4"/><path d="M1804.0 1080V1046.1Q1804.0 1042.1 1808.0 1042.1H1810.7Q1814.7 1042.1 1814.7 1046.1V1080Z" fill="#60a5f4"/></svg>
<div class="abs" style="left:1380px;width:42px;text-align:right;top:950.7px;font-size:12px;line-height:14px;color:#555a60">40</div>
<div class="abs" style="left:1380px;width:42px;text-align:right;top:968.2px;font-size:12px;line-height:14px;color:#555a60">35</div>
<div class="abs" style="left:1380px;width:42px;text-align:right;top:985.6px;font-size:12px;line-height:14px;color:#555a60">30</div>
<div class="abs" style="left:1380px;width:42px;text-align:right;top:1003.1px;font-size:12px;line-height:14px;color:#555a60">25</div>
<div class="abs" style="left:1380px;width:42px;text-align:right;top:1020.6px;font-size:12px;line-height:14px;color:#555a60">20</div>
<div class="abs" style="left:1380px;width:42px;text-align:right;top:1038.0px;font-size:12px;line-height:14px;color:#555a60">15</div>
<div class="abs" style="left:1380px;width:42px;text-align:right;top:1055.5px;font-size:12px;line-height:14px;color:#555a60">10</div>
<div class="abs" style="left:158px;top:1075px;width:1739px;height:1px;background:#fbfbfb"></div>
<div id="bot" class="abs"></div>

</body></html>
